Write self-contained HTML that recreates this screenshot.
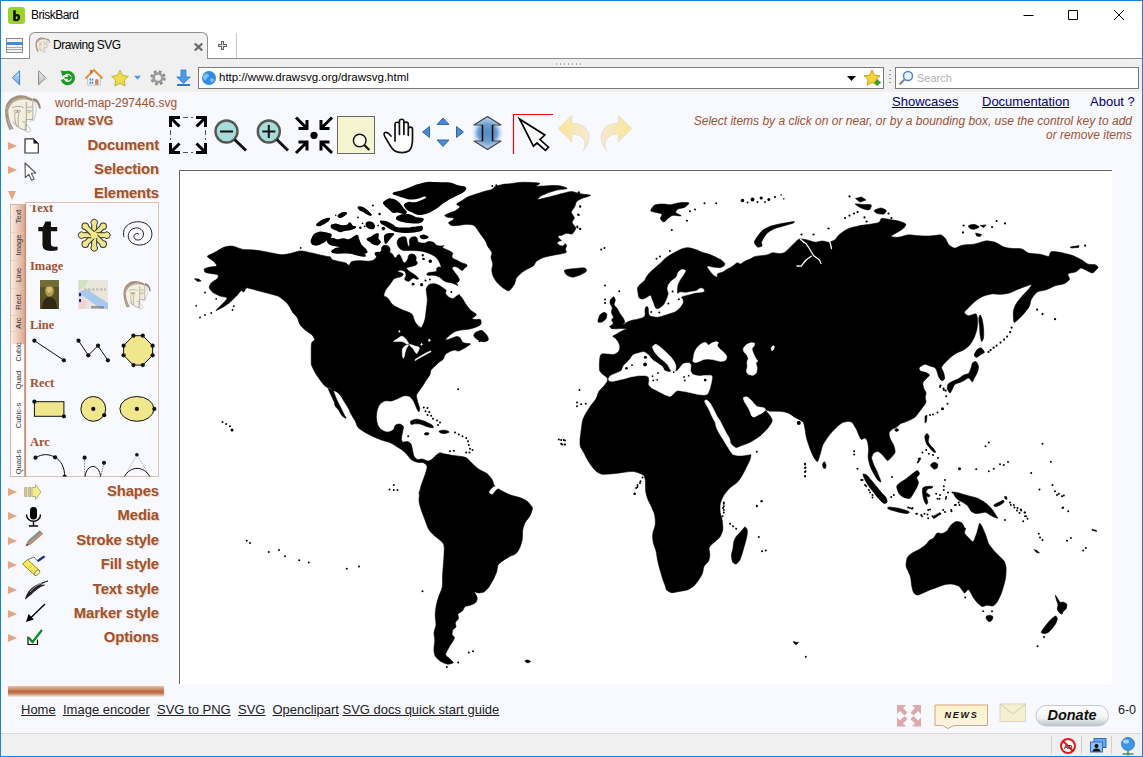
<!DOCTYPE html>
<html>
<head>
<meta charset="utf-8">
<title>Drawing SVG</title>
<style>
html,body{margin:0;padding:0;}
body{width:1143px;height:757px;overflow:hidden;background:#fff;font-family:"Liberation Sans",sans-serif;position:relative;}
.abs{position:absolute;}
#win{position:absolute;left:0;top:0;width:1143px;height:757px;background:#fff;overflow:hidden;}
#winb{position:absolute;left:0;top:0;width:1141px;height:755px;border:1px solid #1883d7;pointer-events:none;}
#title{position:absolute;left:31px;top:8px;font-size:12px;color:#000;letter-spacing:-0.5px;}
#tabrow{position:absolute;left:0;top:31px;width:1143px;height:27px;background:#fff;border-bottom:1px solid #8e8e8e;}
#tab{position:absolute;left:29px;top:1px;width:177px;height:27px;background:#f0f0f0;border:1px solid #8e8e8e;border-bottom:none;border-radius:6px 6px 0 0;}
#tab span{position:absolute;left:23px;top:5px;font-size:12px;color:#000;letter-spacing:-0.45px;}
#toolbar{position:absolute;left:0;top:59px;width:1143px;height:33px;background:#f0f0f0;}
#url{position:absolute;left:198px;top:8px;width:686px;height:22px;background:#fff;border:1px solid #7a7a7a;box-sizing:border-box;}
#url span{position:absolute;left:20px;top:3px;font-size:11.500px;color:#000;}
#search{position:absolute;left:895px;top:8px;width:244px;height:22px;background:#fff;border:1px solid #7a7a7a;box-sizing:border-box;}
#search span{position:absolute;left:21px;top:4px;font-size:11px;color:#b0b0b0;}
#page{position:absolute;left:0;top:93px;width:1143px;height:640px;background:#f8f8ff;box-shadow:0 -1px 0 #f8f8ff;}
#status{position:absolute;left:0;top:733px;width:1143px;height:22px;background:#f0f0f0;border-top:1px solid #d9d9d9;}
.sn{color:#a0522d;}
.menu{position:absolute;right:984px;margin-top:1px;letter-spacing:-0.1px;font-weight:bold;font-size:14.800px;color:#a0522d;text-shadow:1px 1px 1px #ecd2c0;white-space:nowrap;}
.tri{position:absolute;left:8px;margin-top:1px;width:0;height:0;border-left:9px solid #e5a57f;border-top:4.5px solid transparent;border-bottom:4.5px solid transparent;}
.toplink{position:absolute;margin-left:1px;top:1px;font-size:13px;color:#00006e;white-space:nowrap;}
.flink{position:absolute;top:609px;font-size:13px;color:#222;text-decoration:underline;white-space:nowrap;}
#canvas{position:absolute;left:179px;top:77px;width:933px;height:514px;background:#fff;border-left:1px solid #666;border-top:1px solid #666;box-sizing:border-box;box-shadow:-1px -1px 0 #fff;}
.grp{position:absolute;left:30px;font-family:"Liberation Serif",serif;font-weight:bold;font-size:12px;color:#a0522d;}
.vt{position:absolute;left:0px;font-size:8px;color:#444;transform:rotate(-90deg);transform-origin:left top;white-space:nowrap;width:30px;text-align:center;}
</style>
</head>
<body>
<div id="win">
  <!-- title bar -->
  <svg class="abs" style="left:8px;top:7px" width="17" height="17" viewBox="0 0 17 17"><rect x="0" y="0" width="17" height="17" rx="3" fill="#9bd32b"/><path d="M5.2 3.2h2.6v4.2c2.2-1 4.4.2 4.4 2.9 0 2.600-2 3.900-4 3.900-1.100 0-2.200-.2-3-.6z M7.800 9.400v2.700c1.200.3 1.900-.4 1.900-1.500s-.7-1.700-1.900-1.200z" fill="#111"/></svg>
  <div id="title">BriskBard</div>
  <svg class="abs" style="left:1021px;top:9px" width="112" height="14" viewBox="0 0 112 14"><path d="M2.500 6.500h10M47.500 1.500h9v9h-9zM93 1l10 10M103 1l-10 10" fill="none" stroke="#000" stroke-width="1"/></svg>

  <!-- tab row -->
  <div id="tabrow">
    <svg class="abs" style="left:6px;top:7px" width="17" height="15" viewBox="0 0 17 15"><rect x=".5" y=".5" width="16" height="14" fill="#f4f4f4" stroke="#8a8a8a"/><rect x="1" y="4" width="15" height="3" fill="#3d8ee0"/><path d="M1 9.500h15M1 11.500h15" stroke="#aaa"/></svg>
    <div id="tab"><span>Drawing SVG</span>
      
      <svg class="abs" style="left:163px;top:9px" width="11" height="10" viewBox="0 0 11 10"><path d="M1.800 1.500l7.400 7M9.200 1.500l-7.400 7" stroke="#6a6a6a" stroke-width="2.300"/></svg>
    </div>
    <svg class="abs" style="left:217px;top:9px" width="11" height="11" viewBox="0 0 11 11"><path d="M5.500 1v9M1 5.500h9" stroke="#666" stroke-width="3"/><path d="M5.500 2v7M2 5.500h7" stroke="#ddd" stroke-width="1"/></svg>
    <div class="abs" style="left:236px;top:2px;width:1px;height:25px;background:#c8c8c8"></div>
  </div>

  <!-- toolbar -->
  <div id="toolbar">
    <svg class="abs" style="left:0;top:1px" width="200" height="35" viewBox="0 0 200 35">
      <defs><linearGradient id="gBk" x1="0" x2="0" y1="0" y2="1"><stop offset="0" stop-color="#cfe4fb"/><stop offset="1" stop-color="#6aa6ea"/></linearGradient><linearGradient id="gFw" x1="0" x2="0" y1="0" y2="1"><stop offset="0" stop-color="#f2f2f2"/><stop offset="1" stop-color="#b9b9b9"/></linearGradient></defs>
      <path d="M19.600 10.800v14l-7.200-7z" fill="url(#gBk)" stroke="#3a7fd0" stroke-width="1" stroke-linejoin="round"/>
      <path d="M38.600 10.800v14l7.200-7z" fill="url(#gFw)" stroke="#8a8a8a" stroke-width="1" stroke-linejoin="round"/>
      <path d="M62.300 19.500a5.700 5.700 0 1 0 1.200-5.300" fill="none" stroke="#1f9a24" stroke-width="3.200"/><path d="M60.600 10.500l6.200 1-4.200 5z" fill="#1f9a24"/><path d="M64.500 17.800h5.500M68 15.500l2.800 2.300-2.800 2.300" fill="none" stroke="#1f9a24" stroke-width="1.800"/>
      <path d="M85.700 18.500l8.300-8 8.300 8" fill="none" stroke="#f08a24" stroke-width="2.400" stroke-linejoin="miter"/><rect x="90.200" y="10" width="2" height="3.500" fill="#c86a1c"/><path d="M87.700 17.500l6.300-6 6.300 6v7.600H87.700z" fill="#f4f7fb" stroke="#9fb4d0" stroke-width=".7"/><rect x="95" y="19" width="3.500" height="6" rx="1.500" fill="#c98a5a"/><rect x="89.500" y="18.500" width="1.500" height="2" fill="#4a8ad8"/><rect x="91.800" y="18.500" width="1.500" height="2" fill="#4a8ad8"/><rect x="89.500" y="21.800" width="1.500" height="2" fill="#4a8ad8"/><rect x="91.800" y="21.800" width="1.500" height="2" fill="#4a8ad8"/>
      <path d="M120 10.200l2.600 5.300 5.700.8-4.100 4 1 5.700-5.200-2.700-5.200 2.700 1-5.700-4.100-4 5.700-.8z" fill="#ecdc4e" stroke="#c9b030" stroke-width="1" stroke-linejoin="round"/>
      <path d="M134 15.800h7l-3.500 4z" fill="#4f9be8"/>
      <circle cx="158" cy="17.800" r="5.600" fill="none" stroke="#8d8d8d" stroke-width="4.200" stroke-dasharray="2.400 2"/><circle cx="158" cy="17.800" r="4.300" fill="none" stroke="#9c9c9c" stroke-width="2.600"/>
      <path d="M181 10h5v7h4.300l-6.800 6.500-6.800-6.500h4.300z" fill="#4a9cec" stroke="#2d7ad2" stroke-width=".8"/><rect x="177" y="24" width="13" height="2" fill="#2d7ad2"/>
    </svg>
    <div id="url"><span>http://www.drawsvg.org/drawsvg.html</span>
      <svg class="abs" style="left:2px;top:2px" width="16" height="16" viewBox="0 0 16 16"><circle cx="8" cy="8" r="7" fill="#2f8be6"/><path d="M4 4c2-1 4 0 4 2s-3 2-3 4-2 0-3-2 1-3 2-4zM10 8c2 0 3 1 3 2s-2 3-3 2 -1-3 0-4z" fill="#8fd0f5" opacity=".8"/></svg>
      <svg class="abs" style="left:648px;top:8px" width="10" height="6" viewBox="0 0 10 6"><path d="M0 0h9l-4.500 5z" fill="#000"/></svg>
      <svg class="abs" style="left:664px;top:1px" width="20" height="18" viewBox="0 0 20 18"><path d="M9 1l2.400 5.200 5.600.6-4.200 3.800 1.200 5.600L9 13.400 4 16.200l1.200-5.600L1 6.800l5.600-.6z" fill="#f6d337" stroke="#c9a21a" stroke-width="1"/><path d="M14.500 10.500v6M11.500 13.500h6" stroke="#2a9d2a" stroke-width="2.400"/></svg>
    </div>
    <div class="abs" style="left:889px;top:11px;width:2px;height:14px;background:repeating-linear-gradient(#999 0 1px,transparent 1px 4px)"></div>
    <div id="search"><span>Search</span>
      <svg class="abs" style="left:2px;top:2px" width="17" height="16" viewBox="0 0 17 16"><circle cx="10" cy="6" r="4.500" fill="#e6f1fb" stroke="#4b86d0" stroke-width="1.500"/><path d="M6.500 9.500l-5 5" stroke="#888" stroke-width="2.200"/></svg>
    </div>
    <div class="abs" style="left:556px;top:4px;width:28px;height:2px;background:repeating-linear-gradient(90deg,#aaa 0 1px,transparent 1px 4px)"></div>
  </div>

  <!-- page -->
  <div id="page">
    <!-- header -->
    
    <div class="abs sn" style="left:55px;top:3px;font-size:12px;">world-map-297446.svg</div>
    <div class="abs sn" style="left:55px;top:20.500px;font-size:12px;font-weight:bold;text-shadow:1px 1px 1px #ecd2c0;">Draw SVG</div>

    <div class="toplink" style="left:891px;text-decoration:underline">Showcases</div>
    <div class="toplink" style="left:981px;text-decoration:underline">Documentation</div>
    <div class="toplink" style="left:1089px">About ?</div>
    <div class="abs" style="right:11px;top:21px;width:445px;text-align:right;font-size:12px;font-style:italic;color:#a0522d;line-height:14px;">Select items by a click on or near, or by a bounding box, use the control key to add or remove items</div>

    <!-- left menu -->
    <div class="tri" style="top:48px"></div><div class="menu" style="top:43px">Document</div>
    <div class="tri" style="top:72px"></div><div class="menu" style="top:67px">Selection</div>
    <div class="abs" style="left:8px;top:98px;width:0;height:0;border-top:9px solid #e5a57f;border-left:4.500px solid transparent;border-right:4.500px solid transparent;"></div><div class="menu" style="top:91px">Elements</div>
    <div class="tri" style="top:394px"></div><div class="menu" style="top:389.3px">Shapes</div>
    <div class="tri" style="top:418px"></div><div class="menu" style="top:413.3px">Media</div>
    <div class="tri" style="top:443px"></div><div class="menu" style="top:438.3px">Stroke style</div>
    <div class="tri" style="top:467px"></div><div class="menu" style="top:462.3px">Fill style</div>
    <div class="tri" style="top:492px"></div><div class="menu" style="top:487.3px">Text style</div>
    <div class="tri" style="top:516px"></div><div class="menu" style="top:511.3px">Marker style</div>
    <div class="tri" style="top:540px"></div><div class="menu" style="top:535.3px">Options</div>

    <!-- canvas -->
    <div id="canvas"><svg class="abs" style="left:0;top:0" width="932" height="513" viewBox="0 0 932 513"><path d="M423.7 204.0Q422.1 202.8 421.3 201.9L420.2 200.6Q419.4 199.7 419.4 197.3L419.4 194.2Q419.4 191.8 419.6 189.7L419.9 186.8Q420.0 184.7 420.7 184.1L421.5 183.3Q422.1 182.7 423.7 182.8L425.9 183.0Q427.6 183.1 429.5 183.3L432.0 183.5Q433.9 183.6 435.3 182.9L437.2 181.8Q438.6 181.1 439.1 179.6L439.7 177.6Q440.2 176.0 439.6 174.4L438.9 172.2Q438.3 170.5 437.2 169.4L435.8 167.8Q434.7 166.6 434.0 166.2L433.0 165.7Q432.3 165.3 433.7 164.5L435.6 163.5Q437.0 162.7 438.7 161.7L440.9 160.5Q442.6 159.5 444.0 159.0L445.9 158.4Q447.3 157.9 445.6 157.8L443.4 157.6Q441.8 157.5 439.9 157.6L437.4 157.8Q435.5 157.9 433.8 157.7L431.6 157.4Q430.0 157.1 431.6 156.6L433.8 155.8Q435.5 155.3 437.8 154.9L441.0 154.4Q443.3 154.0 444.2 153.2L445.4 152.2Q446.2 151.5 448.1 150.8L450.6 149.8Q452.5 149.0 453.6 148.9L455.1 148.7Q456.2 148.6 458.3 148.0L461.1 147.2Q463.2 146.5 463.9 145.9L464.7 145.1Q465.3 144.4 465.2 142.8L465.0 140.5Q464.9 138.8 465.2 137.8L465.7 136.4Q466.0 135.3 466.7 135.5L467.5 135.8Q468.1 136.0 468.2 137.7L468.4 140.0Q468.5 141.6 468.8 142.7L469.2 144.1Q469.5 145.1 471.8 145.6L474.9 146.1Q477.2 146.5 479.3 146.0L482.1 145.3Q484.2 144.7 485.9 144.1L488.2 143.3Q489.8 142.8 491.5 142.2L493.8 141.5Q495.4 140.9 496.9 139.7L498.9 138.0Q500.3 136.7 501.3 135.3L502.6 133.3Q503.6 131.8 503.4 130.8L503.3 129.4Q503.1 128.3 502.5 127.6L501.7 126.7Q501.0 125.9 503.1 125.4L505.9 124.8Q508.0 124.3 510.1 123.7L512.9 122.9Q515.0 122.3 516.7 122.1L519.0 121.9Q520.6 121.7 522.0 121.4L523.8 121.0Q525.1 120.6 524.6 119.6L523.9 118.2Q523.4 117.1 522.4 117.0L521.0 116.8Q519.9 116.7 518.9 117.5L517.5 118.7Q516.4 119.5 514.8 119.8L512.5 120.1Q510.8 120.3 509.2 120.6L506.9 121.0Q505.2 121.3 503.6 121.1L501.3 120.8Q499.6 120.6 499.0 121.3L498.2 122.1Q497.5 122.7 497.5 121.3L497.5 119.3Q497.5 117.8 497.7 116.4L498.0 114.4Q498.2 112.9 499.1 111.5L500.2 109.5Q501.0 108.0 502.1 106.5L503.5 104.6Q504.5 103.1 505.1 102.1L505.8 100.7Q506.4 99.6 505.6 99.1L504.6 98.4Q503.8 97.9 503.0 98.0L501.9 98.1Q501.0 98.2 500.0 99.1L498.6 100.2Q497.5 101.0 497.1 102.5L496.6 104.4Q496.1 105.9 494.7 107.0L492.7 108.4Q491.2 109.4 490.2 110.7L488.8 112.4Q487.7 113.6 487.4 115.1L487.0 117.1Q486.8 118.5 487.3 119.7L487.9 121.2Q488.4 122.3 487.8 124.1L487.0 126.5Q486.3 128.3 485.5 130.0L484.4 132.2Q483.5 133.9 482.1 135.1L480.1 136.6Q478.6 137.7 477.8 137.6L476.7 137.5Q475.8 137.4 475.4 136.4L474.8 135.0Q474.4 133.9 473.8 132.2L473.0 130.0Q472.3 128.3 471.8 126.9L471.1 125.1Q470.5 123.7 469.4 124.5L467.9 125.5Q466.7 126.2 465.5 126.9L463.8 127.7Q462.5 128.3 461.4 127.9L459.9 127.3Q458.7 126.9 458.5 125.2L458.2 123.0Q457.9 121.3 457.7 119.9L457.5 118.1Q457.3 116.7 458.3 115.6L459.5 114.1Q460.4 112.9 461.8 111.9L463.6 110.5Q464.9 109.4 465.2 108.5L465.7 107.3Q466.0 106.3 467.1 105.0L468.5 103.1Q469.5 101.7 471.2 100.2L473.4 98.3Q475.1 96.8 476.8 95.3L479.0 93.4Q480.7 91.9 482.4 90.2L484.6 88.0Q486.3 86.3 488.6 84.9L491.7 83.1Q494.0 81.7 496.6 80.4L499.9 78.7Q502.4 77.5 504.1 77.2L506.4 76.8Q508.0 76.5 510.6 77.1L513.9 78.0Q516.4 78.6 518.1 79.4L520.4 80.6Q522.0 81.4 524.1 81.9L526.9 82.6Q529.0 83.1 531.1 84.1L533.9 85.3Q536.1 86.3 537.7 87.2L540.0 88.3Q541.7 89.1 542.7 90.2L544.1 91.6Q545.2 92.6 544.7 93.5L544.2 94.6Q543.8 95.4 542.5 95.8L540.8 96.4Q539.6 96.8 537.7 96.6L535.1 96.3Q533.2 96.1 531.6 95.7L529.3 95.1Q527.6 94.7 527.4 95.1L527.2 95.7Q526.9 96.1 528.0 97.6L529.4 99.5Q530.4 101.0 531.6 102.3L533.2 104.0Q534.4 105.2 535.3 105.5L536.5 105.9Q537.5 106.2 537.4 105.1L537.3 103.7Q537.2 102.7 538.9 102.2L541.3 101.5Q543.1 101.0 544.1 100.3L545.5 99.3Q546.6 98.5 547.6 98.0L549.0 97.3Q550.1 96.8 551.3 96.0L553.0 94.9Q554.3 94.0 555.1 93.3L556.2 92.2Q557.1 91.5 558.1 92.0L559.5 92.8Q560.6 93.3 561.6 92.5L563.0 91.4Q564.1 90.5 565.9 89.8L568.3 88.8Q570.1 88.1 571.6 87.3L573.5 86.1Q575.0 85.2 578.8 84.9L583.8 84.4Q587.5 84.0 589.0 83.2L591.0 82.2Q592.5 81.5 594.8 81.9L597.8 82.4Q600.0 82.8 601.5 82.4L603.5 81.9Q605.0 81.5 606.5 80.0L608.5 78.0Q610.0 76.5 611.5 75.0L613.5 73.0Q615.0 71.5 616.1 70.4L617.6 68.9Q618.8 67.8 621.0 68.0L624.0 68.3Q626.2 68.5 628.9 69.4L632.4 70.6Q635.0 71.5 637.2 71.0L640.2 70.3Q642.5 69.8 644.4 70.3L646.9 71.0Q648.8 71.5 650.6 70.8L653.1 69.8Q655.0 69.0 656.2 67.4L657.8 65.2Q659.0 63.5 661.7 61.7L665.3 59.3Q668.0 57.5 671.6 56.6L676.4 55.4Q680.0 54.5 683.6 54.1L688.4 53.5Q692.0 53.0 694.3 52.6L697.3 52.0Q699.5 51.5 700.0 50.2L700.6 48.4Q701.0 47.0 703.7 47.5L707.3 48.1Q710.0 48.5 712.7 49.0L716.3 49.6Q719.0 50.0 721.3 50.9L724.3 52.1Q726.5 53.0 725.6 54.4L724.4 56.2Q723.5 57.5 721.3 58.9L718.3 60.7Q716.0 62.0 714.2 63.1L711.8 64.5Q710.0 65.6 712.7 65.9L716.3 66.3Q719.0 66.5 721.7 65.6L725.3 64.4Q728.0 63.5 731.6 64.0L736.4 64.6Q740.0 65.0 743.6 65.0L748.5 65.0Q752.1 65.0 754.8 64.6L758.4 64.0Q761.1 63.5 762.4 64.7L764.2 66.3Q765.6 67.4 766.5 69.4L767.7 72.0Q768.6 74.0 770.4 75.1L772.8 76.6Q774.6 77.6 776.8 76.6L779.8 75.1Q782.1 74.0 785.7 73.8L790.5 73.6Q794.1 73.4 797.7 72.3L802.5 70.7Q806.1 69.5 808.8 70.0L812.4 70.6Q815.1 71.0 817.8 72.6L821.4 74.8Q824.1 76.4 826.8 76.8L830.4 77.3Q833.1 77.6 835.8 77.6L839.4 77.6Q842.1 77.6 843.9 79.1L846.3 81.0Q848.1 82.4 851.7 82.6L856.5 82.9Q860.1 83.0 862.8 83.9L866.4 85.1Q869.1 86.0 869.5 84.2L870.2 81.8Q870.6 80.0 873.8 80.5L878.0 81.1Q881.1 81.5 884.7 82.4L889.5 83.6Q893.1 84.5 895.8 85.9L899.4 87.7Q902.1 89.0 903.9 90.4L906.3 92.2Q908.1 93.5 910.4 93.5L913.4 93.5Q915.6 93.5 916.5 94.4L917.7 95.6Q918.6 96.5 916.8 98.3L914.4 100.7Q912.6 102.5 910.8 101.6L908.4 100.4Q906.6 99.5 904.8 98.6L902.4 97.4Q900.6 96.5 899.3 97.9L897.5 99.7Q896.1 101.0 893.4 101.5L889.8 102.1Q887.1 102.5 888.0 104.3L889.2 106.7Q890.1 108.5 888.3 109.9L885.9 111.7Q884.1 113.0 881.4 113.5L877.8 114.1Q875.1 114.5 872.4 115.9L868.8 117.7Q866.1 119.0 863.4 119.5L859.8 120.1Q857.1 120.5 855.3 122.8L852.9 125.8Q851.1 128.1 850.6 130.3L850.0 133.3Q849.6 135.6 847.8 137.8L845.4 140.8Q843.6 143.1 841.8 144.9L839.4 147.3Q837.6 149.1 836.4 150.0L834.9 151.2Q833.7 152.1 833.5 148.5L833.3 143.7Q833.1 140.1 834.0 137.8L835.2 134.8Q836.1 132.6 837.9 130.3L840.3 127.3Q842.1 125.1 843.9 123.2L846.3 120.8Q848.1 119.0 849.4 117.2L851.2 114.8Q852.6 113.0 849.4 114.1L845.2 115.6Q842.1 116.6 840.3 117.4L837.9 118.3Q836.1 119.0 834.3 119.9L831.9 121.1Q830.1 122.0 827.4 122.5L823.8 123.1Q821.1 123.5 818.4 123.3L814.8 122.9Q812.1 122.6 809.4 123.4L805.8 124.3Q803.1 125.1 800.8 126.4L797.8 128.2Q795.6 129.6 793.8 131.4L791.4 133.8Q789.6 135.6 787.8 137.4L785.4 139.8Q783.6 141.6 784.9 142.6L786.7 144.1Q788.1 145.2 789.4 144.7L791.2 144.1Q792.6 143.7 793.7 143.3L795.3 142.8Q796.5 142.5 796.8 144.4L797.3 147.1Q797.7 149.1 797.5 151.8L797.3 155.4Q797.1 158.1 796.2 160.8L795.0 164.4Q794.1 167.1 792.7 169.3L790.9 172.3Q789.6 174.6 787.8 175.9L785.4 177.7Q783.6 179.1 781.3 180.0L778.3 181.2Q776.1 182.1 774.3 183.4L771.9 185.2Q770.1 186.6 768.3 188.4L765.9 190.8Q764.1 192.6 763.2 193.7L762.0 195.3Q761.1 196.5 761.9 198.0L762.9 200.0Q763.8 201.5 764.1 203.4L764.6 205.9Q765.0 207.8 764.1 208.5L762.9 209.5Q762.0 210.2 761.0 209.1L759.7 207.6Q758.8 206.5 758.2 204.6L757.5 202.1Q757.0 200.2 756.4 199.1L755.6 197.6Q755.0 196.5 753.5 196.1L751.5 195.6Q750.0 195.2 748.5 194.5L746.5 193.5Q745.0 192.8 743.1 193.9L740.6 195.4Q738.8 196.5 739.1 197.6L739.6 199.1Q740.0 200.2 741.9 200.6L744.4 201.1Q746.2 201.5 747.4 202.2L748.9 203.2Q750.0 204.0 748.9 205.1L747.4 206.6Q746.2 207.8 745.1 208.9L743.6 210.4Q742.5 211.5 742.9 213.4L743.4 215.9Q743.8 217.8 744.5 218.9L745.5 220.4Q746.2 221.5 745.9 223.0L745.4 225.0Q745.0 226.5 745.4 228.0L745.9 230.0Q746.2 231.5 745.1 233.0L743.6 235.0Q742.5 236.5 741.4 238.0L739.9 240.0Q738.8 241.5 737.6 243.0L736.1 245.0Q735.0 246.5 732.8 247.6L729.8 249.1Q727.5 250.2 725.2 251.0L722.2 252.0Q720.0 252.8 718.9 253.9L717.4 255.4Q716.2 256.5 715.1 256.9L713.6 257.4Q712.5 257.8 711.4 258.9L709.9 260.4Q708.8 261.5 709.1 263.4L709.6 265.9Q710.0 267.8 711.1 269.6L712.6 272.1Q713.8 274.0 714.3 276.2L715.0 279.2Q715.5 281.5 714.2 283.0L712.5 285.0Q711.2 286.5 710.1 287.6L708.6 289.1Q707.5 290.2 706.4 288.8L704.9 286.8Q703.8 285.2 702.2 283.8L700.2 281.8Q698.8 280.2 697.2 280.6L695.2 281.1Q693.8 281.5 693.0 283.0L692.0 285.0Q691.2 286.5 692.0 288.8L693.0 291.8Q693.8 294.0 694.9 296.2L696.4 299.2Q697.5 301.5 698.2 303.4L699.2 305.9Q700.0 307.8 700.4 308.9L700.9 310.4Q701.2 311.5 700.1 310.8L698.6 309.8Q697.5 309.0 696.4 307.1L694.9 304.6Q693.8 302.8 692.6 300.5L691.1 297.5Q690.0 295.2 689.4 292.6L688.6 289.1Q688.0 286.5 688.2 283.9L688.5 280.4Q688.8 277.8 688.4 275.5L687.9 272.5Q687.5 270.2 686.8 269.1L685.8 267.6Q685.0 266.5 683.9 267.2L682.4 268.2Q681.2 269.0 680.5 267.5L679.5 265.5Q678.8 264.0 678.0 262.1L677.0 259.6Q676.2 257.8 675.1 255.9L673.6 253.4Q672.5 251.5 671.4 251.1L669.9 250.6Q668.8 250.2 666.9 250.6L664.4 251.1Q662.5 251.5 661.0 252.6L659.0 254.1Q657.5 255.2 656.0 256.8L654.0 258.8Q652.5 260.2 651.0 262.1L649.0 264.6Q647.5 266.5 646.0 268.8L644.0 271.8Q642.5 274.0 641.8 277.0L640.8 281.0Q640.0 284.0 639.2 286.2L638.2 289.2Q637.5 291.5 636.4 290.0L634.9 288.0Q633.8 286.5 632.6 283.9L631.1 280.4Q630.0 277.8 628.9 274.4L627.4 269.9Q626.2 266.5 625.9 263.9L625.4 260.4Q625.0 257.8 624.6 255.9L624.1 253.4Q623.8 251.5 622.6 250.8L621.1 249.8Q620.0 249.0 618.5 248.2L616.5 247.2Q615.0 246.5 613.5 245.4L611.5 243.9Q610.0 242.8 608.5 242.2L606.5 241.5Q605.0 241.0 603.5 240.8L601.5 240.5Q600.0 240.2 599.2 240.2L598.2 240.2Q597.5 240.2 595.2 240.2L592.2 240.2Q590.0 240.2 588.5 239.7L586.5 239.0Q585.0 238.5 586.9 240.9L589.4 244.1Q591.2 246.5 591.6 247.6L592.1 249.1Q592.5 250.2 591.0 252.5L589.0 255.5Q587.5 257.8 585.2 260.0L582.2 263.0Q580.0 265.2 577.0 267.1L573.0 269.6Q570.0 271.5 567.0 272.6L563.0 274.1Q560.0 275.2 558.5 275.8L556.5 276.5Q555.0 277.0 556.5 279.1L558.5 281.9Q560.0 284.0 563.4 283.6L567.9 283.1Q571.2 282.8 570.9 284.6L570.4 287.1Q570.0 289.0 568.9 291.2L567.4 294.2Q566.2 296.5 565.1 298.8L563.6 301.8Q562.5 304.0 561.0 306.2L559.0 309.2Q557.5 311.5 555.2 313.0L552.2 315.0Q550.0 316.5 548.1 318.8L545.6 321.8Q543.8 324.0 542.6 326.6L541.1 330.1Q540.0 332.8 540.0 335.4L540.0 338.9Q540.0 341.5 540.8 344.1L541.8 347.6Q542.5 350.2 542.6 352.9L542.9 356.4Q543.0 359.0 542.1 361.2L540.9 364.2Q540.0 366.5 538.1 368.0L535.6 370.0Q533.8 371.5 532.2 373.0L530.2 375.0Q528.8 376.5 529.1 378.8L529.6 381.8Q530.0 384.0 529.6 385.9L529.1 388.4Q528.8 390.2 527.2 391.8L525.2 393.8Q523.8 395.2 523.4 397.5L522.9 400.5Q522.5 402.8 521.4 404.6L519.9 407.1Q518.8 409.0 517.2 410.9L515.2 413.4Q513.8 415.2 511.9 416.4L509.4 417.9Q507.5 419.0 505.2 419.4L502.2 419.9Q500.0 420.2 497.4 420.8L493.9 421.5Q491.2 422.0 489.8 421.1L487.8 419.9Q486.2 419.0 486.0 417.9L485.7 416.4Q485.5 415.2 484.6 413.0L483.4 410.0Q482.5 407.8 481.8 405.1L480.8 401.6Q480.0 399.0 479.2 396.0L478.2 392.0Q477.5 389.0 477.1 386.4L476.6 382.9Q476.2 380.2 475.3 377.6L474.0 374.1Q473.0 371.5 472.9 368.9L472.6 365.4Q472.5 362.8 473.4 360.1L474.6 356.6Q475.5 354.0 475.4 351.0L475.1 347.0Q475.0 344.0 473.9 341.4L472.4 337.9Q471.2 335.2 470.1 333.0L468.6 330.0Q467.5 327.8 466.9 325.5L466.1 322.5Q465.5 320.2 465.5 316.9L465.5 312.4Q465.5 309.0 465.0 307.5L464.3 305.5Q463.8 304.0 461.9 303.2L459.4 302.2Q457.5 301.5 456.0 301.1L454.0 300.6Q452.5 300.2 449.5 300.6L445.5 301.1Q442.5 301.5 439.5 301.9L435.5 302.4Q432.5 302.8 429.5 303.0L425.5 303.3Q422.5 303.5 421.0 302.9L419.0 302.1Q417.5 301.5 416.0 300.0L414.0 298.0Q412.5 296.5 411.0 294.2L409.0 291.2Q407.5 289.0 406.4 286.8L404.9 283.8Q403.8 281.5 402.6 279.6L401.1 277.1Q400.0 275.2 400.0 273.0L400.0 270.0Q400.0 267.8 400.4 265.1L400.9 261.6Q401.2 259.0 401.6 256.0L402.1 252.0Q402.5 249.0 403.6 246.8L405.1 243.8Q406.2 241.5 407.8 239.2L409.8 236.2Q411.2 234.0 412.8 232.1L414.8 229.6Q416.2 227.8 417.0 225.5L418.0 222.5Q418.8 220.2 420.2 218.8L422.2 216.8Q423.8 215.2 424.9 213.8L426.4 211.8Q427.5 210.2 427.5 209.2L427.6 207.8Q427.6 206.8 425.9 205.6L423.7 204.0ZM472.6 35.9Q473.8 34.0 476.4 33.6L479.9 33.1Q482.5 32.8 484.8 33.1L487.8 33.6Q490.0 34.0 493.0 33.2L497.0 32.2Q500.0 31.5 503.0 31.5L507.0 31.5Q510.0 31.5 508.5 33.0L506.5 35.0Q505.0 36.5 502.8 36.9L499.8 37.4Q497.5 37.8 496.8 38.9L495.8 40.4Q495.0 41.5 497.2 42.6L500.2 44.1Q502.5 45.2 499.5 44.9L495.5 44.4Q492.5 44.0 491.0 45.1L489.0 46.6Q487.5 47.8 486.4 48.9L484.9 50.4Q483.8 51.5 482.6 50.4L481.1 48.9Q480.0 47.8 480.8 46.2L481.8 44.2Q482.5 42.8 480.6 42.4L478.1 41.9Q476.2 41.5 474.4 41.1L471.9 40.6Q470.0 40.2 471.1 38.4L472.6 35.9ZM576.4 67.1Q577.5 65.2 579.0 63.4L581.0 60.9Q582.5 59.0 584.8 57.9L587.8 56.4Q590.0 55.2 593.0 54.5L597.0 53.5Q600.0 52.8 604.5 52.0L610.5 51.0Q615.0 50.2 614.6 50.8L614.1 51.5Q613.8 52.0 610.4 53.0L605.9 54.3Q602.5 55.2 599.9 56.0L596.4 57.0Q593.8 57.8 591.9 58.9L589.4 60.4Q587.5 61.5 586.4 63.0L584.9 65.0Q583.8 66.5 583.0 68.0L582.0 70.0Q581.2 71.5 581.6 72.6L582.1 74.1Q582.5 75.2 581.0 75.6L579.0 76.1Q577.5 76.5 576.4 75.0L574.9 73.0Q573.8 71.5 574.9 69.6L576.4 67.1ZM432.6 126.4Q433.8 125.2 434.3 126.4L435.0 127.9Q435.5 129.0 435.0 130.5L434.3 132.5Q433.8 134.0 434.9 135.1L436.4 136.6Q437.5 137.8 438.2 139.2L439.2 141.2Q440.0 142.8 441.1 144.2L442.6 146.2Q443.8 147.8 444.1 148.9L444.6 150.4Q445.0 151.5 443.9 152.6L442.4 154.1Q441.2 155.2 439.0 155.8L436.0 156.5Q433.8 157.0 432.2 156.7L430.2 156.3Q428.8 156.0 430.2 155.0L432.2 153.7Q433.8 152.8 433.0 151.6L432.0 150.1Q431.2 149.0 432.0 148.2L433.0 147.2Q433.8 146.5 433.0 145.0L432.0 143.0Q431.2 141.5 431.6 140.0L432.1 138.0Q432.5 136.5 431.8 135.4L430.8 133.9Q430.0 132.8 430.0 131.6L430.0 130.1Q430.0 129.0 431.1 127.9L432.6 126.4ZM418.9 146.2Q419.5 144.0 420.8 143.1L422.5 141.9Q423.8 141.0 424.7 141.5L426.0 142.2Q427.0 142.8 426.8 144.2L426.5 146.2Q426.2 147.8 425.1 148.7L423.6 150.0Q422.5 151.0 421.0 151.2L419.0 151.3Q417.5 151.5 418.1 149.2L418.9 146.2ZM675.5 27.5L681.5 26.0L686.0 29.0L680.0 31.1ZM680.3 33.2Q683.0 33.5 685.7 33.5L689.3 33.5Q692.0 33.5 691.3 35.3L690.3 37.7Q689.6 39.5 687.2 38.9L684.0 38.0Q681.5 37.4 679.3 36.0L676.3 34.1Q674.0 32.6 676.7 32.9L680.3 33.2ZM698.8 37.4Q701.0 36.5 702.8 37.4L705.2 38.6Q707.0 39.5 706.1 40.7L704.9 42.2Q704.0 43.4 701.8 43.1L698.8 42.8Q696.5 42.5 695.6 41.6L694.4 40.4Q693.5 39.5 695.8 38.6L698.8 37.4ZM792.3 53.5Q794.1 53.0 795.9 53.9L798.3 55.1Q800.1 56.0 798.3 56.7L795.9 57.7Q794.1 58.4 792.7 58.2L790.9 57.8Q789.6 57.5 789.1 56.6L788.5 55.4Q788.1 54.5 789.9 54.1L792.3 53.5ZM800.1 54.5L806.1 53.9L803.7 56.6ZM795.6 62.0L801.6 63.5L800.1 65.6L796.5 65.0ZM890.1 76.1L899.1 74.6L898.5 76.4L891.6 77.0ZM801.8 147.3Q802.5 149.1 802.8 151.8L803.3 155.4Q803.7 158.1 803.7 160.8L803.7 164.4Q803.7 167.1 803.0 168.4L802.2 170.2Q801.6 171.6 801.1 169.3L800.5 166.3Q800.1 164.1 799.9 161.4L799.7 157.8Q799.5 155.1 799.2 152.8L798.8 149.8Q798.6 147.6 799.0 146.2L799.6 144.4Q800.1 143.1 800.8 144.9L801.8 147.3ZM796.4 179.6Q797.5 177.8 798.6 177.4L800.1 176.9Q801.2 176.5 802.4 178.0L803.9 180.0Q805.0 181.5 803.5 182.2L801.5 183.2Q800.0 184.0 798.9 184.9L797.4 186.1Q796.2 187.0 795.5 186.1L794.5 184.9Q793.8 184.0 794.9 182.1L796.4 179.6ZM795.1 190.6Q796.2 190.2 797.0 191.8L798.0 193.8Q798.8 195.2 798.4 197.1L797.9 199.6Q797.5 201.5 796.4 203.4L794.9 205.9Q793.8 207.8 793.4 208.9L792.9 210.4Q792.5 211.5 791.4 210.0L789.9 208.0Q788.8 206.5 787.6 207.2L786.1 208.2Q785.0 209.0 783.5 209.8L781.5 210.8Q780.0 211.5 778.5 211.9L776.5 212.4Q775.0 212.8 774.2 214.2L773.2 216.2Q772.5 217.8 771.8 219.2L770.8 221.2Q770.0 222.8 769.1 221.2L767.9 219.2Q767.0 217.8 767.3 216.2L767.7 214.2Q768.0 212.8 769.4 212.0L771.1 211.0Q772.5 210.2 774.4 209.5L776.9 208.5Q778.8 207.8 780.2 206.6L782.2 205.1Q783.8 204.0 785.2 203.6L787.2 203.1Q788.8 202.8 789.5 200.9L790.5 198.4Q791.2 196.5 791.6 195.0L792.1 193.0Q792.5 191.5 793.6 191.1L795.1 190.6ZM745.0 245.2L747.0 244.0L746.5 250.2L745.0 252.0ZM716.4 257.6Q717.0 257.5 717.7 257.9L718.6 258.6Q719.2 259.0 718.6 259.4L717.7 260.1Q717.0 260.5 716.4 260.4L715.6 260.1Q715.0 260.0 715.0 259.4L715.0 258.6Q715.0 258.0 715.6 257.9L716.4 257.6ZM643.9 291.0Q644.5 290.2 645.0 291.4L645.7 292.9Q646.2 294.0 646.0 295.1L645.7 296.6Q645.5 297.8 644.8 297.5L643.8 297.2Q643.0 297.0 642.9 295.7L642.6 294.0Q642.5 292.8 643.1 292.0L643.9 291.0ZM685.1 303.3Q686.2 303.5 687.8 305.1L689.8 307.4Q691.2 309.0 692.8 310.9L694.8 313.4Q696.2 315.2 697.8 317.1L699.8 319.6Q701.2 321.5 702.8 323.0L704.8 325.0Q706.2 326.5 706.6 328.0L707.1 330.0Q707.5 331.5 706.4 331.9L704.9 332.4Q703.8 332.8 702.2 331.2L700.2 329.2Q698.8 327.8 697.2 325.9L695.2 323.4Q693.8 321.5 692.2 319.6L690.2 317.1Q688.8 315.2 687.6 313.4L686.1 310.9Q685.0 309.0 684.2 307.1L683.2 304.6Q682.5 302.8 683.6 303.0L685.1 303.3ZM712.8 336.4Q715.0 336.5 717.6 337.1L721.1 337.9Q723.8 338.5 725.6 339.2L728.1 340.2Q730.0 341.0 729.2 341.5L728.2 342.2Q727.5 342.8 725.2 342.4L722.2 341.9Q720.0 341.5 717.8 340.9L714.8 340.1Q712.5 339.5 711.1 339.1L709.4 338.4Q708.0 338.0 707.9 337.4L707.6 336.6Q707.5 336.0 709.8 336.1L712.8 336.4ZM718.9 312.6Q720.0 311.5 721.9 310.4L724.4 308.9Q726.2 307.8 728.1 306.2L730.6 304.2Q732.5 302.8 734.0 301.6L736.0 300.1Q737.5 299.0 738.2 300.1L739.2 301.6Q740.0 302.8 738.9 303.9L737.4 305.4Q736.2 306.5 737.0 308.0L738.0 310.0Q738.8 311.5 738.0 313.4L737.0 315.9Q736.2 317.8 735.1 319.6L733.6 322.1Q732.5 324.0 731.8 325.1L730.8 326.6Q730.0 327.8 728.1 327.4L725.6 326.9Q723.8 326.5 722.2 325.4L720.2 323.9Q718.8 322.8 718.0 320.5L717.0 317.5Q716.2 315.2 717.4 314.1L718.9 312.6ZM746.2 263.0Q747.0 262.0 747.7 263.0L748.6 264.3Q749.2 265.2 748.9 266.8L748.4 268.8Q748.0 270.2 748.6 271.4L749.4 272.9Q750.0 274.0 751.1 275.1L752.6 276.6Q753.8 277.8 754.5 278.9L755.5 280.4Q756.2 281.5 755.3 281.4L754.0 281.1Q753.0 281.0 752.0 279.6L750.5 277.9Q749.5 276.5 748.5 275.4L747.2 273.9Q746.2 272.8 745.7 270.5L745.0 267.5Q744.5 265.2 745.2 264.3L746.2 263.0ZM752.6 291.9Q753.8 291.0 755.0 291.5L756.7 292.2Q758.0 292.8 757.9 294.0L757.6 295.7Q757.5 297.0 756.4 297.4L754.9 298.1Q753.8 298.5 752.6 297.1L751.1 295.4Q750.0 294.0 751.1 293.1L752.6 291.9ZM737.0 291.5L740.0 286.5L740.8 287.8L738.0 292.2ZM746.0 315.6Q747.5 315.2 749.1 315.2L751.4 315.2Q753.0 315.2 752.9 315.8L752.6 316.5Q752.5 317.0 751.0 317.2L749.0 317.5Q747.5 317.8 746.9 318.9L746.1 320.4Q745.5 321.5 746.9 322.2L748.6 323.2Q750.0 324.0 749.9 324.6L749.6 325.4Q749.5 326.0 748.5 325.8L747.2 325.5Q746.2 325.2 746.8 327.1L747.5 329.6Q748.0 331.5 747.5 332.2L746.8 333.2Q746.2 334.0 745.5 332.5L744.5 330.5Q743.8 329.0 743.4 327.1L742.9 324.6Q742.5 322.8 742.5 320.9L742.5 318.4Q742.5 316.5 744.0 316.1L746.0 315.6ZM776.0 321.4Q777.5 321.5 779.4 322.1L781.9 322.9Q783.8 323.5 785.6 324.0L788.1 324.7Q790.0 325.2 792.2 325.8L795.2 326.5Q797.5 327.0 799.8 328.4L802.8 330.1Q805.0 331.5 806.9 333.1L809.4 335.4Q811.2 337.0 812.4 338.7L813.9 341.0Q815.0 342.8 816.0 344.2L817.3 346.2Q818.2 347.8 816.4 347.0L813.9 346.0Q812.0 345.2 810.1 344.0L807.6 342.3Q805.8 341.0 804.2 341.3L802.2 341.7Q800.8 342.0 799.2 342.2L797.2 342.5Q795.8 342.8 794.2 342.0L792.2 341.0Q790.8 340.2 790.0 338.8L789.0 336.8Q788.2 335.2 786.8 334.1L784.8 332.6Q783.2 331.5 781.8 330.8L779.8 329.8Q778.2 329.0 777.5 328.2L776.5 327.2Q775.8 326.5 774.8 324.9L773.5 322.6Q772.5 321.0 774.0 321.1L776.0 321.4ZM816.8 332.2Q818.2 331.5 819.8 330.8L821.8 329.8Q823.2 329.0 823.6 329.6L824.1 330.4Q824.5 331.0 823.0 332.1L821.0 333.4Q819.5 334.5 818.1 334.9L816.4 335.6Q815.0 336.0 814.5 335.4L813.8 334.6Q813.2 334.0 814.8 333.2L816.8 332.2ZM755.1 344.2Q756.2 343.5 757.4 342.9L758.9 342.1Q760.0 341.5 760.4 341.9L760.9 342.4Q761.2 342.8 760.1 343.5L758.6 344.5Q757.5 345.2 756.4 346.0L754.9 347.0Q753.8 347.8 753.4 347.2L752.9 346.5Q752.5 346.0 753.6 345.2L755.1 344.2ZM566.8 357.9Q567.5 359.0 567.4 360.9L567.1 363.4Q567.0 365.2 566.4 367.5L565.6 370.5Q565.0 372.8 564.2 375.4L563.2 378.9Q562.5 381.5 561.8 383.8L560.8 386.8Q560.0 389.0 558.9 390.4L557.4 392.1Q556.2 393.5 555.1 392.9L553.6 392.1Q552.5 391.5 552.1 389.2L551.6 386.2Q551.2 384.0 551.8 382.1L552.5 379.6Q553.0 377.8 553.2 375.5L553.5 372.5Q553.8 370.2 554.5 368.8L555.5 366.8Q556.2 365.2 557.8 363.8L559.8 361.8Q561.2 360.2 562.4 358.8L563.9 356.8Q565.0 355.2 565.8 356.4L566.8 357.9ZM615.3 471.1Q616.2 471.5 617.0 471.4L618.0 471.1Q618.8 471.0 618.0 471.9L617.0 473.1Q616.2 474.0 615.7 473.6L615.0 473.1Q614.5 472.8 614.0 472.0L613.5 471.0Q613.0 470.2 614.0 470.6L615.3 471.1ZM726.6 389.1Q727.0 386.5 728.1 385.4L729.6 383.9Q730.8 382.8 733.0 381.6L736.0 380.1Q738.2 379.0 740.5 377.5L743.5 375.5Q745.8 374.0 746.9 372.5L748.4 370.5Q749.5 369.0 750.6 368.6L752.1 368.1Q753.2 367.8 754.4 365.9L755.9 363.4Q757.0 361.5 758.5 361.9L760.5 362.4Q762.0 362.8 763.5 362.0L765.5 361.0Q767.0 360.2 768.1 358.4L769.6 355.9Q770.8 354.0 772.2 352.9L774.2 351.4Q775.8 350.2 777.6 350.6L780.1 351.1Q782.0 351.5 782.9 353.4L784.1 355.9Q785.0 357.8 784.9 359.2L784.6 361.2Q784.5 362.8 786.0 364.2L788.0 366.2Q789.5 367.8 790.6 368.9L792.1 370.4Q793.2 371.5 794.4 368.5L795.9 364.5Q797.0 361.5 797.8 358.5L798.8 354.5Q799.5 351.5 800.2 352.6L801.2 354.1Q802.0 355.2 803.1 357.9L804.6 361.4Q805.8 364.0 806.5 366.6L807.5 370.1Q808.2 372.8 809.8 374.6L811.8 377.1Q813.2 379.0 815.1 380.9L817.6 383.4Q819.5 385.2 821.0 386.8L823.0 388.8Q824.5 390.2 825.0 392.1L825.7 394.6Q826.2 396.5 826.1 399.5L825.9 403.5Q825.8 406.5 825.0 409.5L824.0 413.5Q823.2 416.5 822.5 418.8L821.5 421.8Q820.8 424.0 819.6 426.2L818.1 429.2Q817.0 431.5 815.9 432.6L814.4 434.1Q813.2 435.2 811.4 434.9L808.9 434.4Q807.0 434.0 805.5 434.6L803.5 435.4Q802.0 436.0 800.5 434.6L798.5 432.9Q797.0 431.5 795.9 430.0L794.4 428.0Q793.2 426.5 792.5 425.0L791.5 423.0Q790.8 421.5 790.0 420.4L789.0 418.9Q788.2 417.8 787.1 419.2L785.6 421.2Q784.5 422.8 783.8 421.6L782.8 420.1Q782.0 419.0 781.2 417.9L780.2 416.4Q779.5 415.2 777.2 414.5L774.2 413.5Q772.0 412.8 769.8 413.0L766.8 413.3Q764.5 413.5 762.2 414.4L759.2 415.6Q757.0 416.5 754.8 417.2L751.8 418.2Q749.5 419.0 747.6 419.9L745.1 421.1Q743.2 422.0 741.4 422.8L738.9 423.8Q737.0 424.5 735.9 423.6L734.4 422.4Q733.2 421.5 732.7 419.2L732.0 416.2Q731.5 414.0 731.3 411.8L731.0 408.8Q730.8 406.5 730.0 404.6L729.0 402.1Q728.2 400.2 727.5 398.8L726.5 396.8Q725.8 395.2 726.1 392.6L726.6 389.1ZM808.4 444.4Q809.5 444.0 810.6 444.4L812.1 444.9Q813.2 445.2 812.9 446.5L812.4 448.2Q812.0 449.5 811.1 449.9L809.9 450.6Q809.0 451.0 808.2 450.2L807.2 449.2Q806.5 448.5 806.3 447.5L806.0 446.2Q805.8 445.2 806.9 444.9L808.4 444.4ZM876.4 425.6Q877.0 426.5 877.9 428.0L879.1 430.0Q880.0 431.5 881.0 431.4L882.3 431.1Q883.2 431.0 884.4 431.5L885.9 432.2Q887.0 432.8 886.9 434.2L886.6 436.2Q886.5 437.8 885.5 438.5L884.2 439.5Q883.2 440.2 882.9 441.2L882.4 442.5Q882.0 443.5 881.1 442.9L879.9 442.1Q879.0 441.5 878.4 440.4L877.6 438.9Q877.0 437.8 877.4 436.6L877.9 435.1Q878.2 434.0 877.7 432.5L877.0 430.5Q876.5 429.0 876.0 427.4L875.5 425.1Q875.0 423.5 875.6 424.4L876.4 425.6ZM877.0 446.8Q877.5 447.8 877.0 449.2L876.3 451.2Q875.8 452.8 874.6 454.2L873.1 456.2Q872.0 457.8 870.9 458.9L869.4 460.4Q868.2 461.5 867.0 461.9L865.3 462.4Q864.0 462.8 863.0 462.4L861.7 461.9Q860.8 461.5 861.5 460.4L862.5 458.9Q863.2 457.8 864.4 456.2L865.9 454.2Q867.0 452.8 868.1 451.5L869.6 449.8Q870.8 448.5 872.2 447.3L874.2 445.7Q875.8 444.5 876.3 445.5L877.0 446.8ZM854.0 378.5L857.0 379.5L859.5 382.0L856.5 381.5ZM912.0 358.2L916.5 359.5L916.5 360.5L912.0 359.2ZM824.5 325.2L826.5 326.0L827.0 328.5L825.0 327.8ZM14.5 107.8L18.8 108.0L21.2 110.0L17.5 110.5ZM218.3 68.2Q218.8 67.3 220.0 66.8L221.6 66.1Q222.7 65.6 223.8 65.7L225.2 65.9Q226.2 66.0 226.5 67.8L226.9 70.3Q227.1 72.1 227.5 73.2L228.0 74.6Q228.4 75.6 228.8 75.4L229.4 75.0Q229.7 74.7 229.6 73.2L229.4 71.1Q229.3 69.5 229.7 68.6L230.2 67.4Q230.6 66.4 231.9 66.2L233.7 65.8Q235.0 65.6 235.7 66.0L236.5 66.5Q237.2 66.9 237.3 68.1L237.5 69.6Q237.6 70.8 238.7 71.2L240.1 71.7Q241.1 72.1 242.4 72.1L244.2 72.1Q245.5 72.1 246.2 71.6L247.0 70.9Q247.7 70.4 248.9 70.4L250.4 70.4Q251.6 70.4 252.5 70.9L253.8 71.6Q254.7 72.1 255.1 72.8L255.6 73.7Q256.0 74.3 257.6 74.6L259.7 74.9Q261.2 75.2 262.2 74.9L263.4 74.6Q264.3 74.3 263.6 75.0L262.8 75.8Q262.1 76.5 263.2 77.0L264.6 77.7Q265.6 78.2 266.9 78.8L268.7 79.5Q270.0 80.0 270.9 80.7L272.1 81.5Q273.1 82.2 272.7 83.1L272.1 84.3Q271.7 85.2 272.0 85.9L272.4 86.8Q272.6 87.4 273.9 88.0L275.7 88.7Q277.0 89.2 278.3 90.0L280.1 91.0Q281.4 91.8 282.8 92.2L284.7 92.7Q286.2 93.1 286.6 93.6L287.1 94.3Q287.5 94.9 286.4 95.7L285.0 96.7Q284.0 97.5 283.6 98.2L283.1 99.0Q282.7 99.7 281.9 99.3L280.8 98.8Q280.1 98.4 279.3 97.7L278.2 96.8Q277.4 96.2 276.5 95.9L275.3 95.6Q274.4 95.3 273.6 95.8L272.5 96.5Q271.7 97.1 272.5 98.2L273.6 99.8Q274.4 101.0 275.4 102.3L276.8 104.1Q277.9 105.4 278.4 106.4L279.1 107.8Q279.6 108.9 279.1 109.7L278.4 110.7Q277.9 111.5 277.3 111.5L276.6 111.5Q276.1 111.5 276.8 112.5L277.6 113.9Q278.3 115.0 277.4 114.5L276.2 113.8Q275.2 113.2 273.9 112.7L272.2 112.0Q270.9 111.5 269.6 111.4L267.8 111.2Q266.5 111.1 265.4 110.5L264.0 109.8Q263.0 109.3 262.2 108.5L261.2 107.5Q260.4 106.7 259.1 106.0L257.3 105.2Q256.0 104.5 254.7 104.4L252.9 104.2Q251.6 104.1 250.4 104.2L248.9 104.4Q247.7 104.5 247.3 104.0L246.8 103.3Q246.4 102.7 247.2 102.4L248.2 101.8Q249.0 101.4 250.6 101.3L252.7 101.1Q254.2 101.0 255.0 100.7L256.1 100.4Q256.9 100.1 256.7 99.3L256.6 98.3Q256.4 97.5 257.1 97.0L258.0 96.3Q258.6 95.7 259.4 96.0L260.5 96.4Q261.2 96.6 261.0 95.6L260.6 94.2Q260.4 93.1 259.8 92.1L259.1 90.7Q258.6 89.6 257.8 88.6L256.8 87.2Q256.0 86.1 254.7 85.3L252.9 84.3Q251.6 83.5 250.0 82.8L247.9 82.0Q246.4 81.3 244.8 80.9L242.7 80.4Q241.1 80.0 239.3 79.9L236.8 79.7Q235.0 79.6 233.2 79.6L230.7 79.6Q228.9 79.6 227.3 79.6L225.2 79.6Q223.6 79.6 222.6 79.2L221.2 78.6Q220.1 78.2 219.5 77.3L218.6 76.1Q217.9 75.2 217.7 74.3L217.3 73.0Q217.1 72.1 217.1 71.6L217.1 70.9Q217.1 70.4 217.6 69.5L218.3 68.2ZM267.8 42.8Q269.5 42.1 271.4 41.3L274.0 40.4Q275.9 39.7 277.3 38.5L279.2 36.9Q280.6 35.7 279.2 35.0L277.3 34.1Q275.9 33.3 277.8 32.1L280.3 30.6Q282.2 29.4 284.1 28.2L286.6 26.6Q288.5 25.4 290.9 24.7L294.1 23.7Q296.5 23.0 299.3 22.1L303.1 20.8Q306.0 19.9 307.9 19.5L310.4 19.0Q312.3 18.6 313.0 17.6L314.0 16.4Q314.7 15.4 317.3 14.8L320.8 13.9Q323.4 13.2 325.3 13.1L327.9 12.9Q329.8 12.7 333.6 12.2L338.7 11.6Q342.5 11.1 346.3 11.3L351.3 11.5Q355.1 11.6 356.8 11.8L359.0 12.1Q360.7 12.2 359.0 13.2L356.8 14.5Q355.1 15.4 359.0 15.2L364.0 15.0Q367.8 14.8 371.2 14.6L375.6 14.5Q378.9 14.3 381.9 15.3L385.8 16.5Q388.8 17.5 385.1 18.0L380.2 18.6Q376.6 19.1 373.9 19.9L370.5 21.0Q367.8 21.8 365.5 22.9L362.3 24.3Q359.9 25.4 359.0 26.5L357.7 28.0Q356.7 29.1 360.5 28.1L365.6 26.8Q369.4 25.9 373.0 24.9L377.7 23.7Q381.3 22.7 384.4 22.0L388.5 20.9Q391.6 20.2 394.0 20.9L397.2 22.0Q399.5 22.7 403.4 23.2L408.4 23.8Q412.2 24.3 409.4 25.1L405.6 26.2Q402.7 27.0 400.8 27.9L398.3 29.2Q396.4 30.2 395.9 31.8L395.3 34.1Q394.8 35.7 393.6 37.4L392.0 39.6Q390.8 41.3 392.0 42.9L393.6 45.2Q394.8 46.8 393.8 48.2L392.6 50.1Q391.6 51.6 393.0 53.2L395.0 55.5Q396.4 57.1 395.2 59.0L393.6 61.6Q392.4 63.5 390.7 63.0L388.5 62.4Q386.9 61.9 385.4 62.6L383.5 63.5Q382.1 64.3 380.7 64.5L378.8 64.8Q377.3 65.1 378.3 66.2L379.6 67.8Q380.5 69.0 382.4 70.4L385.0 72.3Q386.9 73.8 386.4 75.2L385.8 77.1Q385.3 78.5 385.8 79.4L386.4 80.5Q386.9 81.4 385.0 81.9L382.4 82.5Q380.5 83.0 378.6 83.3L376.1 83.7Q374.2 84.1 372.3 84.4L369.7 84.9Q367.8 85.2 365.9 85.8L363.4 86.6Q361.5 87.3 359.8 88.2L357.6 89.5Q355.9 90.4 355.2 91.9L354.3 93.8Q353.6 95.2 351.4 96.1L348.6 97.4Q346.4 98.4 344.8 99.5L342.5 101.1Q340.9 102.3 339.4 103.7L337.5 105.6Q336.1 107.1 335.6 109.0L335.0 111.5Q334.5 113.4 332.9 115.6L330.6 118.4Q329.0 120.6 327.3 119.6L325.1 118.3Q323.4 117.4 321.5 115.7L319.0 113.5Q317.1 111.8 315.9 109.9L314.3 107.4Q313.1 105.5 312.6 103.6L312.0 101.1Q311.5 99.1 312.0 97.2L312.6 94.7Q313.1 92.8 312.4 90.9L311.5 88.4Q310.7 86.5 311.2 85.0L311.9 83.1Q312.3 81.7 310.9 79.8L309.0 77.3Q307.6 75.4 307.1 73.9L306.5 72.0Q306.0 70.6 304.8 68.9L303.2 66.7Q302.0 65.1 300.8 63.4L299.2 61.2Q298.1 59.5 296.9 57.8L295.3 55.6Q294.1 54.0 292.0 53.7L289.1 53.4Q287.0 53.2 284.6 53.5L281.4 54.0Q279.0 54.4 276.7 54.5L273.5 54.7Q271.1 54.7 270.1 53.8L268.9 52.5Q267.9 51.6 269.4 50.9L271.3 49.9Q272.7 49.2 273.2 48.5L273.8 47.5Q274.3 46.8 272.4 46.7L269.8 46.6Q267.9 46.5 266.7 45.9L265.2 45.1Q264.0 44.4 265.6 43.7L267.8 42.8ZM389.9 98.1Q392.5 97.8 396.2 97.4L401.2 96.9Q405.0 96.5 405.6 97.6L406.4 99.1Q407.0 100.2 404.9 101.4L402.1 102.9Q400.0 104.0 397.8 104.8L394.8 105.8Q392.5 106.5 390.6 105.8L388.1 104.8Q386.2 104.0 385.5 102.5L384.5 100.5Q383.8 99.0 386.4 98.6L389.9 98.1ZM131.2 176.4Q131.2 171.5 132.4 170.8L133.9 169.8Q135.0 169.0 134.2 167.5L133.2 165.5Q132.5 164.0 130.2 162.5L127.2 160.5Q125.0 159.0 123.5 157.5L121.5 155.5Q120.0 154.0 119.2 151.8L118.2 148.8Q117.5 146.5 116.0 145.0L114.0 143.0Q112.5 141.5 111.4 139.2L109.9 136.2Q108.8 134.0 107.2 132.5L105.2 130.5Q103.8 129.0 102.2 127.9L100.2 126.4Q98.8 125.2 96.1 124.5L92.6 123.5Q90.0 122.8 87.0 122.0L83.0 121.0Q80.0 120.2 77.4 119.5L73.9 118.5Q71.2 117.8 69.8 117.4L67.8 116.9Q66.2 116.5 65.5 118.0L64.5 120.0Q63.8 121.5 63.0 120.8L62.0 119.8Q61.2 119.0 60.1 120.5L58.6 122.5Q57.5 124.0 55.2 126.2L52.2 129.2Q50.0 131.5 47.8 133.0L44.8 135.0Q42.5 136.5 40.2 137.6L37.2 139.1Q35.0 140.2 36.5 138.8L38.5 136.8Q40.0 135.2 41.9 133.4L44.4 130.9Q46.2 129.0 46.6 128.2L47.1 127.2Q47.5 126.5 45.2 126.1L42.2 125.6Q40.0 125.2 37.8 124.1L34.8 122.6Q32.5 121.5 31.4 120.0L29.9 118.0Q28.8 116.5 29.5 115.0L30.5 113.0Q31.2 111.5 33.1 110.4L35.6 108.9Q37.5 107.8 37.9 106.6L38.4 105.1Q38.8 104.0 36.9 103.6L34.4 103.1Q32.5 102.8 30.2 102.4L27.2 101.9Q25.0 101.5 24.6 100.4L24.1 98.9Q23.8 97.8 25.6 97.2L28.1 96.5Q30.0 96.0 32.2 95.8L35.2 95.5Q37.5 95.2 36.4 93.8L34.9 91.8Q33.8 90.2 31.5 88.8L28.5 86.8Q26.2 85.2 28.5 84.3L31.5 83.0Q33.8 82.0 36.8 80.2L40.8 77.8Q43.8 76.0 46.4 75.6L49.9 75.1Q52.5 74.8 55.5 75.9L59.5 77.4Q62.5 78.5 66.2 78.7L71.2 78.8Q75.0 79.0 78.8 79.6L83.8 80.4Q87.5 81.0 91.6 81.9L97.1 83.1Q101.2 84.0 103.9 83.6L107.4 83.1Q110.0 82.8 113.0 81.8L117.0 80.5Q120.0 79.5 123.0 80.1L127.0 80.9Q130.0 81.5 133.0 82.2L137.0 83.2Q140.0 84.0 143.0 84.6L147.0 85.4Q150.0 86.0 149.9 85.7L149.8 85.4Q149.8 85.1 150.4 86.2L151.3 87.7Q152.0 88.8 154.0 89.3L156.7 89.9Q158.7 90.3 160.9 90.8L163.9 91.4Q166.1 91.8 167.0 92.7L168.2 93.9Q169.1 94.8 169.8 93.4L170.7 91.6Q171.3 90.3 173.8 90.1L177.1 89.8Q179.5 89.6 182.2 89.8L185.8 90.1Q188.5 90.3 190.2 90.0L192.6 89.5Q194.4 89.1 196.1 86.6L198.3 83.3Q200.0 80.9 200.5 80.5L201.2 80.0Q201.7 79.6 201.6 78.8L201.4 77.7Q201.3 76.9 201.8 76.3L202.5 75.4Q203.1 74.7 204.0 74.5L205.2 74.3Q206.1 74.0 207.0 74.5L208.3 75.2Q209.2 75.6 209.5 76.5L210.0 77.8Q210.3 78.7 210.1 79.5L209.8 80.5Q209.6 81.3 210.5 81.8L211.8 82.5Q212.7 83.1 213.1 84.0L213.6 85.2Q214.0 86.1 214.7 86.4L215.5 86.7Q216.2 87.0 216.6 86.1L217.1 84.9Q217.5 83.9 218.2 83.8L219.0 83.6Q219.7 83.5 220.2 84.5L220.9 85.9Q221.4 87.0 222.0 88.3L222.7 90.1Q223.2 91.4 223.8 91.5L224.7 91.7Q225.4 91.8 226.2 90.6L227.2 89.1Q228.0 87.9 228.1 86.8L228.3 85.4Q228.4 84.4 229.1 83.9L230.0 83.3Q230.6 82.8 231.8 83.0L233.4 83.3Q234.6 83.5 235.1 84.3L235.8 85.3Q236.3 86.1 236.2 87.2L236.0 88.6Q235.9 89.6 236.4 90.3L237.1 91.2Q237.6 91.8 237.2 92.5L236.7 93.3Q236.3 94.0 235.1 94.4L233.6 94.9Q232.4 95.3 231.1 95.6L229.3 95.9Q228.0 96.2 227.5 96.6L226.8 97.1Q226.2 97.5 227.0 98.3L228.1 99.3Q228.9 100.1 230.2 100.9L231.9 102.0Q233.2 102.7 234.3 103.5L235.7 104.6Q236.7 105.4 237.4 106.2L238.3 107.2Q238.9 108.0 238.3 108.1L237.4 108.3Q236.7 108.4 235.8 107.9L234.6 107.2Q233.7 106.7 233.0 107.1L232.2 107.6Q231.5 108.0 230.7 108.8L229.7 109.8Q228.9 110.6 227.8 110.2L226.4 109.7Q225.4 109.3 225.1 108.9L224.8 108.4Q224.5 108.0 225.0 106.9L225.7 105.5Q226.2 104.5 226.0 103.4L225.6 102.0Q225.4 101.0 224.6 100.5L223.5 99.8Q222.7 99.2 221.6 99.2L220.0 99.2Q218.8 99.2 218.4 99.6L217.9 100.2Q217.5 100.6 218.8 101.0L220.6 101.5Q221.9 101.9 222.4 102.3L223.1 102.8Q223.6 103.2 223.1 103.8L222.4 104.7Q221.9 105.4 220.6 105.8L218.8 106.3Q217.5 106.7 216.4 106.9L215.0 107.3Q214.0 107.6 213.3 108.5L212.5 109.7Q211.8 110.6 210.9 111.9L209.7 113.7Q208.7 115.0 207.7 116.3L206.3 118.1Q205.2 119.4 204.7 121.0L204.0 123.3Q203.5 125.0 204.7 125.4L206.3 126.0Q207.5 126.5 209.0 128.8L211.0 131.8Q212.5 134.0 215.5 135.5L219.5 137.5Q222.5 139.0 225.5 140.1L229.5 141.6Q232.5 142.8 233.2 145.4L234.2 148.9Q235.0 151.5 236.9 153.4L239.4 155.9Q241.2 157.8 242.4 155.1L243.9 151.6Q245.0 149.0 245.4 146.0L245.9 142.0Q246.2 139.0 246.6 136.0L247.1 132.0Q247.5 129.0 247.1 126.0L246.6 122.0Q246.2 119.0 246.2 118.8L246.0 118.6Q245.9 118.5 246.5 117.3L247.2 115.7Q247.7 114.6 248.6 114.0L249.8 113.3Q250.7 112.8 252.3 112.8L254.4 112.8Q256.0 112.8 257.3 113.5L259.1 114.3Q260.4 115.0 261.4 115.8L262.8 116.8Q263.9 117.6 264.7 118.1L265.7 118.8Q266.5 119.4 266.1 120.3L265.6 121.5Q265.2 122.4 266.3 123.7L267.7 125.3Q268.8 126.5 270.2 126.9L272.2 127.4Q273.8 127.8 274.9 126.6L276.4 125.1Q277.5 124.0 278.5 124.3L279.8 124.7Q280.8 125.0 282.3 127.3L284.2 130.5Q285.6 132.9 287.0 134.8L288.9 137.3Q290.3 139.2 292.2 140.4L294.8 142.0Q296.7 143.2 296.2 143.9L295.6 144.8Q295.1 145.6 293.9 146.0L292.3 146.7Q291.1 147.1 292.3 147.6L293.9 148.3Q295.1 148.7 296.8 148.5L299.0 148.2Q300.6 147.9 300.9 149.6L301.2 151.8Q301.4 153.5 299.5 154.4L297.0 155.7Q295.1 156.7 293.2 157.1L290.6 157.8Q288.7 158.2 286.4 158.5L283.2 158.8Q280.8 159.0 278.9 159.5L276.4 160.1Q274.5 160.6 272.6 162.0L270.0 163.9Q268.1 165.4 267.2 166.6L265.9 168.1Q265.0 169.3 266.4 169.0L268.3 168.4Q269.7 168.1 271.6 167.3L274.2 166.2Q276.1 165.4 277.3 165.6L278.8 165.9Q280.0 166.2 280.7 167.8L281.7 170.0Q282.4 171.7 284.1 171.9L286.3 172.3Q288.0 172.5 288.9 172.6L290.2 172.7Q291.1 172.8 289.5 173.9L287.2 175.4Q285.6 176.5 283.4 177.7L280.6 179.2Q278.4 180.4 277.3 180.0L275.7 179.3Q274.5 178.8 273.1 179.3L271.2 180.0Q269.7 180.4 268.3 181.4L266.4 182.6Q265.0 183.6 264.5 185.0L263.9 186.9Q263.4 188.4 262.0 189.3L260.1 190.6Q258.6 191.5 257.2 192.9L255.3 194.8Q253.9 196.3 252.9 197.1L251.7 198.2Q250.7 199.0 250.5 200.5L250.2 202.5Q250.0 204.0 248.9 205.5L247.4 207.5Q246.2 209.0 245.1 210.9L243.6 213.4Q242.5 215.2 241.4 216.8L239.9 218.8Q238.8 220.2 238.0 221.4L237.0 222.9Q236.2 224.0 236.6 225.9L237.1 228.4Q237.5 230.2 238.2 232.5L239.2 235.5Q240.0 237.8 239.6 238.9L239.1 240.4Q238.8 241.5 238.0 240.0L237.0 238.0Q236.2 236.5 235.5 234.6L234.5 232.1Q233.8 230.2 232.6 228.8L231.1 226.8Q230.0 225.2 228.1 225.0L225.6 224.7Q223.8 224.5 221.9 225.5L219.4 226.8Q217.5 227.8 215.6 228.5L213.1 229.5Q211.2 230.2 209.4 230.0L206.9 229.7Q205.0 229.5 203.5 230.5L201.5 231.8Q200.0 232.8 199.1 234.6L197.9 237.1Q197.0 239.0 196.8 241.2L196.5 244.2Q196.2 246.5 196.6 248.8L197.1 251.8Q197.5 254.0 198.6 255.5L200.1 257.5Q201.2 259.0 203.1 259.8L205.6 260.8Q207.5 261.5 209.4 260.8L211.9 259.8Q213.8 259.0 214.1 257.5L214.6 255.5Q215.0 254.0 216.5 253.6L218.5 253.1Q220.0 252.8 221.1 253.5L222.6 254.5Q223.8 255.2 223.4 257.1L222.9 259.6Q222.5 261.5 222.1 263.4L221.6 265.9Q221.2 267.8 221.6 268.9L222.1 270.4Q222.5 271.5 224.0 271.1L226.0 270.6Q227.5 270.2 228.6 271.0L230.1 272.0Q231.2 272.8 231.6 274.6L232.1 277.1Q232.5 279.0 232.9 280.9L233.4 283.4Q233.8 285.2 234.9 286.4L236.4 287.9Q237.5 289.0 239.0 288.6L241.0 288.1Q242.5 287.8 244.0 288.5L246.0 289.5Q247.5 290.2 248.6 289.9L250.1 289.4Q251.2 289.0 252.8 287.5L254.8 285.5Q256.2 284.0 257.4 283.2L258.9 282.2Q260.0 281.5 261.1 281.9L262.6 282.4Q263.8 282.8 265.6 283.1L268.1 283.6Q270.0 284.0 273.0 284.4L277.0 284.9Q280.0 285.2 281.9 285.6L284.4 286.1Q286.2 286.5 287.4 287.6L288.9 289.1Q290.0 290.2 291.5 291.8L293.5 293.8Q295.0 295.2 296.5 296.4L298.5 297.9Q300.0 299.0 302.2 300.1L305.2 301.6Q307.5 302.8 309.0 304.6L311.0 307.1Q312.5 309.0 312.9 310.5L313.4 312.5Q313.8 314.0 315.6 315.5L318.1 317.5Q320.0 319.0 323.0 320.5L327.0 322.5Q330.0 324.0 333.0 324.8L337.0 325.8Q340.0 326.5 342.2 327.6L345.2 329.1Q347.5 330.2 349.0 332.1L351.0 334.6Q352.5 336.5 352.5 336.9L352.5 337.4Q352.5 337.8 351.8 340.0L350.8 343.0Q350.0 345.2 348.5 347.1L346.5 349.6Q345.0 351.5 344.2 353.8L343.2 356.8Q342.5 359.0 342.5 361.6L342.5 365.1Q342.5 367.8 341.8 370.4L340.8 373.9Q340.0 376.5 338.9 378.4L337.4 380.9Q336.2 382.8 334.4 383.5L331.9 384.5Q330.0 385.2 328.1 386.4L325.6 387.9Q323.8 389.0 321.9 390.5L319.4 392.5Q317.5 394.0 317.4 395.9L317.1 398.4Q317.0 400.2 316.0 402.5L314.7 405.5Q313.8 407.8 312.2 410.4L310.2 413.9Q308.8 416.5 307.2 418.0L305.2 420.0Q303.8 421.5 301.9 421.6L299.4 421.9Q297.5 422.0 296.4 421.5L294.9 420.8Q293.8 420.2 294.9 422.1L296.4 424.6Q297.5 426.5 297.1 428.0L296.6 430.0Q296.2 431.5 294.4 432.4L291.9 433.6Q290.0 434.5 288.5 434.7L286.5 435.0Q285.0 435.2 284.2 436.8L283.2 438.8Q282.5 440.2 281.0 441.0L279.0 442.0Q277.5 442.8 277.9 444.2L278.4 446.2Q278.8 447.8 277.6 448.9L276.1 450.4Q275.0 451.5 275.4 452.9L275.9 454.6Q276.2 456.0 275.1 456.9L273.6 458.1Q272.5 459.0 272.4 460.5L272.1 462.5Q272.0 464.0 272.9 464.8L274.1 465.8Q275.0 466.5 273.9 468.4L272.4 470.9Q271.2 472.8 270.1 474.6L268.6 477.1Q267.5 479.0 266.8 480.5L265.8 482.5Q265.0 484.0 266.9 485.5L269.4 487.5Q271.2 489.0 272.0 489.9L273.0 491.1Q273.8 492.0 271.9 492.4L269.4 493.1Q267.5 493.5 265.2 492.5L262.2 491.2Q260.0 490.2 258.5 488.8L256.5 486.8Q255.0 485.2 254.6 483.4L254.1 480.9Q253.8 479.0 254.1 476.0L254.6 472.0Q255.0 469.0 254.6 466.8L254.1 463.8Q253.8 461.5 254.5 459.2L255.5 456.2Q256.2 454.0 255.9 451.0L255.4 447.0Q255.0 444.0 255.4 441.0L255.9 437.0Q256.2 434.0 257.0 431.4L258.0 427.9Q258.8 425.2 259.9 422.6L261.4 419.1Q262.5 416.5 262.5 412.8L262.5 407.8Q262.5 404.0 262.9 399.5L263.4 393.5Q263.8 389.0 264.0 384.1L264.3 377.6Q264.5 372.8 261.6 370.5L257.9 367.5Q255.0 365.2 253.1 363.4L250.6 360.9Q248.8 359.0 247.6 356.0L246.1 352.0Q245.0 349.0 243.9 346.0L242.4 342.0Q241.2 339.0 240.5 336.4L239.5 332.9Q238.8 330.2 239.1 326.9L239.6 322.4Q240.0 319.0 239.6 320.5L239.1 322.5Q238.8 324.0 239.5 321.0L240.5 317.0Q241.2 314.0 242.4 311.0L243.9 307.0Q245.0 304.0 245.8 301.4L246.8 297.9Q247.5 295.2 246.4 294.1L244.9 292.6Q243.8 291.5 241.9 291.5L239.4 291.5Q237.5 291.5 235.6 290.8L233.1 289.8Q231.2 289.0 230.1 287.5L228.6 285.5Q227.5 284.0 226.0 282.5L224.0 280.5Q222.5 279.0 220.6 277.9L218.1 276.4Q216.2 275.2 214.4 274.1L211.9 272.6Q210.0 271.5 207.4 270.8L203.9 269.8Q201.2 269.0 199.4 268.2L196.9 267.2Q195.0 266.5 192.0 265.0L188.0 263.0Q185.0 261.5 182.8 260.0L179.8 258.0Q177.5 256.5 176.9 254.6L176.1 252.1Q175.5 250.2 174.3 248.4L172.7 245.9Q171.5 244.0 170.4 241.8L169.1 238.8Q168.0 236.5 166.9 234.8L165.6 232.7Q164.5 231.0 163.4 229.2L162.1 226.8Q161.0 225.0 159.8 223.7L158.2 222.0Q157.0 220.8 154.9 219.9L152.1 218.8Q150.0 218.0 148.5 217.2L146.5 216.1Q145.0 215.2 143.5 213.4L141.5 210.9Q140.0 209.0 138.5 206.8L136.5 203.8Q135.0 201.5 133.9 199.2L132.4 196.2Q131.2 194.0 131.2 192.1L131.2 189.6Q131.2 187.8 131.2 187.8L131.2 187.8Q131.2 187.8 131.2 182.9L131.2 176.4ZM149.9 221.8Q151.0 224.2 152.1 226.3L153.4 229.2Q154.5 231.2 154.7 232.4L154.8 233.9Q155.0 235.0 156.3 236.4L158.0 238.3Q159.2 239.8 159.9 241.2L160.8 243.1Q161.5 244.5 163.0 245.6L165.0 246.9Q166.5 248.0 165.8 246.6L164.8 244.7Q164.0 243.2 162.9 241.1L161.6 238.2Q160.5 236.0 159.4 233.9L157.9 231.1Q156.8 229.0 156.2 227.3L155.3 225.2Q154.8 223.5 154.2 222.0L153.5 220.0Q153.0 218.5 151.3 217.8L149.2 216.8Q147.5 216.0 148.6 218.5L149.9 221.8ZM234.4 248.5Q236.2 247.8 238.9 248.5L242.4 249.5Q245.0 250.2 247.2 251.4L250.2 252.9Q252.5 254.0 252.9 254.9L253.4 256.1Q253.8 257.0 251.9 256.7L249.4 256.3Q247.5 256.0 245.2 255.0L242.2 253.7Q240.0 252.8 238.1 252.8L235.6 252.8Q233.8 252.8 233.0 253.1L232.0 253.6Q231.2 254.0 230.9 252.9L230.4 251.4Q230.0 250.2 231.9 249.5L234.4 248.5ZM263.1 259.2Q265.0 259.0 266.5 259.6L268.5 260.4Q270.0 261.0 268.5 261.5L266.5 262.2Q265.0 262.8 263.5 262.5L261.5 262.2Q260.0 262.0 259.6 261.3L259.1 260.4Q258.8 259.8 260.6 259.5L263.1 259.2ZM246.6 261.5Q247.5 261.2 248.1 261.7L248.9 262.3Q249.5 262.8 248.9 263.2L248.1 263.8Q247.5 264.2 246.6 264.1L245.4 263.9Q244.5 263.8 244.5 263.2L244.5 262.5Q244.5 262.0 245.4 261.8L246.6 261.5ZM299.5 159.7Q301.4 159.0 302.4 159.7L303.6 160.7Q304.6 161.4 305.5 162.6L306.8 164.2Q307.8 165.4 308.0 166.6L308.3 168.1Q308.6 169.3 307.4 169.8L305.8 170.4Q304.6 170.9 303.2 170.7L301.3 170.4Q299.8 170.1 298.4 169.2L296.5 167.9Q295.1 167.0 294.6 166.2L294.0 165.3Q293.5 164.6 294.0 163.6L294.6 162.4Q295.1 161.4 297.0 160.7L299.5 159.7ZM347.1 489.0Q348.0 488.8 348.9 489.3L350.1 490.0Q351.0 490.5 350.1 490.9L348.9 491.6Q348.0 492.0 347.2 491.7L346.2 491.3Q345.5 491.0 345.4 490.6L345.1 489.9Q345.0 489.5 345.9 489.3L347.1 489.0Z" fill="#000" stroke="#000" stroke-width="0.6" stroke-linejoin="round"/><path d="M133.2 65.5Q134.1 63.5 135.7 62.9L137.8 62.0Q139.3 61.3 141.4 61.5L144.0 61.8Q146.0 62.0 147.6 62.5L149.7 63.1Q151.2 63.5 150.8 64.6L150.2 66.1Q149.8 67.2 148.4 67.9L146.6 68.8Q145.3 69.5 144.0 70.4L142.2 71.6Q140.8 72.5 139.5 72.9L137.7 73.5Q136.4 73.9 135.3 73.7L133.8 73.4Q132.6 73.2 132.2 72.3L131.6 71.1Q131.2 70.2 132.1 68.2L133.2 65.5ZM150.7 68.1Q152.0 67.2 153.6 67.9L155.6 68.8Q157.2 69.5 159.0 69.0L161.4 68.4Q163.2 68.0 164.9 68.4L167.3 69.0Q169.1 69.5 170.4 68.6L172.2 67.4Q173.6 66.5 174.7 65.8L176.2 64.9Q177.3 64.3 177.7 65.8L178.3 67.9Q178.8 69.5 179.4 71.0L180.3 73.1Q181.0 74.7 182.4 75.8L184.1 77.3Q185.5 78.4 185.9 79.3L186.5 80.5Q187.0 81.4 185.6 81.6L183.8 81.9Q182.5 82.1 183.4 83.0L184.6 84.2Q185.5 85.1 183.7 84.9L181.3 84.6Q179.5 84.4 177.3 83.7L174.3 82.8Q172.1 82.1 169.9 81.9L166.9 81.6Q164.6 81.4 162.4 81.6L159.4 81.9Q157.2 82.1 155.4 81.7L153.0 81.1Q151.2 80.6 152.6 79.7L154.4 78.6Q155.7 77.7 157.3 77.4L159.4 77.1Q160.9 76.9 160.3 76.2L159.4 75.4Q158.7 74.7 156.7 74.5L154.0 74.2Q152.0 73.9 151.1 73.5L149.9 72.9Q149.0 72.5 148.6 71.8L148.0 70.9Q147.5 70.2 148.9 69.3L150.7 68.1ZM140.5 50.7Q142.3 49.4 144.6 48.7L147.5 47.8Q149.8 47.2 149.1 48.0L148.2 49.2Q147.5 50.1 146.4 50.8L144.9 51.7Q143.8 52.4 142.5 53.0L140.7 53.9Q139.3 54.6 138.5 54.4L137.3 54.1Q136.4 53.9 138.2 52.5L140.5 50.7ZM154.4 53.6Q155.7 53.1 157.5 53.8L159.9 54.7Q161.7 55.3 163.5 55.1L165.8 54.8Q167.6 54.6 168.3 53.7L169.2 52.5Q169.9 51.6 170.5 52.7L171.4 54.2Q172.1 55.3 173.2 55.6L174.7 55.9Q175.8 56.1 174.2 56.8L172.2 57.6Q170.6 58.3 168.8 58.5L166.4 58.8Q164.6 59.1 163.3 59.5L161.5 60.1Q160.2 60.5 158.8 59.9L157.1 59.0Q155.7 58.3 154.6 57.9L153.1 57.3Q152.0 56.8 151.8 56.2L151.5 55.3Q151.2 54.6 152.6 54.1L154.4 53.6ZM161.1 42.8Q162.4 41.9 163.8 41.9L165.5 41.9Q166.9 41.9 165.8 42.8L164.3 44.0Q163.2 44.9 162.3 45.4L161.1 46.0Q160.2 46.4 159.5 46.0L158.6 45.4Q157.9 44.9 159.3 44.0L161.1 42.8ZM181.2 36.5Q182.5 36.7 183.8 37.6L185.6 38.8Q187.0 39.7 188.3 41.1L190.1 42.8Q191.4 44.2 190.5 44.0L189.3 43.7Q188.5 43.4 187.1 42.5L185.3 41.4Q184.0 40.5 182.9 40.0L181.4 39.4Q180.3 39.0 179.6 38.1L178.7 36.9Q178.0 36.0 179.4 36.2L181.2 36.5ZM188.3 51.3Q189.2 50.9 190.3 51.3L191.8 51.9Q192.9 52.4 193.4 53.3L194.0 54.4Q194.4 55.3 194.0 56.0L193.4 56.9Q192.9 57.6 191.8 57.3L190.3 57.1Q189.2 56.8 188.5 56.4L187.6 55.8Q187.0 55.3 186.7 54.4L186.4 53.3Q186.2 52.4 187.1 51.9L188.3 51.3ZM190.1 66.9Q191.4 66.5 192.5 65.6L194.0 64.4Q195.1 63.5 196.0 63.3L197.2 63.0Q198.1 62.8 197.9 64.3L197.6 66.4Q197.4 68.0 198.3 68.9L199.5 70.1Q200.4 71.0 199.5 71.9L198.3 73.0Q197.4 73.9 196.0 73.5L194.3 72.9Q192.9 72.5 192.0 71.8L190.8 70.9Q189.9 70.2 189.0 69.6L187.9 68.7Q187.0 68.0 188.3 67.5L190.1 66.9ZM207.9 63.2Q209.3 62.8 210.6 62.8L212.4 62.8Q213.8 62.8 212.9 63.7L211.7 64.9Q210.8 65.8 209.9 66.9L208.7 68.4Q207.8 69.5 207.1 70.4L206.2 71.6Q205.6 72.5 205.3 71.1L205.0 69.3Q204.8 68.0 204.8 66.9L204.8 65.4Q204.8 64.3 206.2 63.8L207.9 63.2ZM242.7 64.5Q243.7 64.2 245.1 64.8L246.8 65.5Q248.1 66.0 247.3 66.4L246.3 66.9Q245.5 67.3 244.4 67.3L243.0 67.3Q242.0 67.3 241.5 66.7L240.8 65.8Q240.2 65.1 241.3 64.9L242.7 64.5ZM197.8 81.6Q198.9 81.4 200.2 82.1L202.0 82.9Q203.3 83.6 204.2 83.4L205.4 83.1Q206.3 82.9 205.9 84.2L205.3 86.0Q204.8 87.3 203.5 87.1L201.7 86.8Q200.4 86.6 199.2 86.1L197.8 85.5Q196.6 85.1 196.2 84.2L195.6 83.0Q195.1 82.1 196.3 81.9L197.8 81.6ZM204.5 50.7Q206.3 50.9 208.1 51.8L210.5 53.0Q212.3 53.9 213.2 54.7L214.3 55.9Q215.2 56.8 217.9 57.1L221.5 57.3Q224.2 57.6 226.8 57.3L230.4 57.1Q233.1 56.8 235.8 56.4L239.3 55.8Q242.0 55.3 242.0 56.5L242.0 57.9Q242.0 59.1 239.8 59.5L236.8 60.1Q234.6 60.5 231.5 60.8L227.3 61.1Q224.2 61.3 221.5 60.8L217.9 60.3Q215.2 59.8 213.9 59.1L212.1 58.2Q210.8 57.6 209.4 56.7L207.6 55.5Q206.3 54.6 205.0 53.9L203.2 53.0Q201.8 52.4 201.4 51.7L200.8 50.8Q200.4 50.1 202.1 50.4L204.5 50.7ZM207.5 28.9Q209.3 27.8 211.1 28.3L213.5 28.9Q215.2 29.3 216.6 30.4L218.4 31.9Q219.7 33.0 220.6 34.4L221.8 36.1Q222.7 37.5 223.8 38.6L225.3 40.1Q226.4 41.2 225.7 41.6L224.8 42.2Q224.2 42.7 222.4 42.0L220.0 41.1Q218.2 40.5 216.7 40.7L214.6 41.0Q213.0 41.2 211.9 40.1L210.4 38.6Q209.3 37.5 208.4 36.8L207.2 35.9Q206.3 35.2 205.4 34.1L204.2 32.6Q203.3 31.5 205.1 30.4L207.5 28.9ZM222.2 44.1Q224.2 43.4 226.0 43.7L228.3 44.0Q230.1 44.2 231.9 45.1L234.3 46.3Q236.1 47.2 238.3 47.4L241.3 47.7Q243.5 47.9 242.6 49.0L241.4 50.5Q240.5 51.6 238.3 51.6L235.3 51.6Q233.1 51.6 230.9 51.4L227.9 51.1Q225.7 50.9 223.9 50.4L221.5 49.8Q219.7 49.4 218.8 48.9L217.6 48.3Q216.7 47.9 216.9 47.2L217.2 46.3Q217.5 45.7 219.5 45.0L222.2 44.1ZM220.6 20.5Q224.2 19.6 227.7 18.1L232.5 16.0Q236.1 14.4 239.6 13.5L244.4 12.3Q248.0 11.4 251.5 11.7L256.3 12.0Q259.9 12.2 263.0 12.2L267.2 12.2Q270.3 12.2 272.5 13.1L275.5 14.3Q277.7 15.2 280.2 15.6L283.5 16.2Q285.9 16.6 285.3 17.8L284.4 19.3Q283.7 20.4 281.5 21.5L278.5 23.0Q276.2 24.1 274.0 25.2L271.0 26.7Q268.8 27.8 267.0 28.9L264.6 30.4Q262.9 31.5 261.5 32.6L259.7 34.1Q258.4 35.2 256.6 36.4L254.2 37.9Q252.4 39.0 250.7 39.9L248.3 41.1Q246.5 41.9 244.3 42.4L241.3 43.0Q239.0 43.4 237.3 42.8L234.9 41.9Q233.1 41.2 231.3 40.3L228.9 39.1Q227.1 38.2 226.3 36.9L225.1 35.1Q224.2 33.8 225.5 33.1L227.3 32.2Q228.6 31.5 230.9 31.8L233.8 32.1Q236.1 32.3 238.3 31.4L241.3 30.2Q243.5 29.3 244.9 28.4L246.6 27.2Q248.0 26.3 247.1 25.7L245.9 24.8Q245.0 24.1 242.8 25.0L239.8 26.2Q237.6 27.1 235.3 27.3L232.4 27.6Q230.1 27.8 228.3 27.4L226.0 26.8Q224.2 26.3 222.4 25.7L220.0 24.8Q218.2 24.1 216.4 23.6L214.0 23.0Q212.3 22.6 215.8 21.7L220.6 20.5Z" fill="#000" stroke="#000" stroke-width="1.8" stroke-linejoin="round"/><path d="M430.0 205.3Q430.7 204.4 432.6 203.7L435.2 202.7Q437.0 202.0 438.5 201.3L440.4 200.4Q441.8 199.7 442.2 198.3L442.9 196.4Q443.3 194.9 444.3 194.0L445.6 192.7Q446.5 191.8 447.7 190.6L449.3 189.0Q450.4 187.9 451.1 186.7L452.1 185.1Q452.8 183.9 454.2 183.4L456.1 182.8Q457.5 182.3 459.4 181.9L461.9 181.2Q463.8 180.8 465.0 181.5L466.6 182.4Q467.8 183.1 468.5 184.1L469.4 185.3Q470.1 186.3 471.1 187.2L472.3 188.5Q473.3 189.4 474.7 190.4L476.6 191.6Q478.0 192.6 479.4 193.5L481.3 194.8Q482.7 195.7 483.2 196.9L483.8 198.5Q484.3 199.7 485.7 200.1L487.6 200.8Q489.0 201.2 490.4 200.8L492.3 200.1Q493.7 199.7 494.7 199.9L495.9 200.2Q496.9 200.5 497.8 199.3L499.1 197.7Q500.0 196.5 501.0 195.3L502.2 193.8Q503.2 192.6 505.1 192.3L507.6 192.0Q509.5 191.8 510.0 192.5L510.6 193.4Q511.1 194.2 510.8 195.8L510.5 198.0Q510.3 199.7 511.0 200.9L511.9 202.4Q512.6 203.6 514.5 204.1L517.0 204.7Q518.9 205.2 521.3 204.9L524.4 204.6Q526.8 204.4 528.5 204.4L530.7 204.4Q532.3 204.4 532.1 206.3L531.8 208.8Q531.5 210.7 531.1 212.6L530.4 215.1Q530.0 217.0 529.3 218.9L528.3 221.4Q527.6 223.3 526.4 223.5L524.8 223.8Q523.7 224.1 521.8 223.8L519.3 223.5Q517.4 223.3 515.5 222.8L513.0 222.2Q511.1 221.7 508.7 221.2L505.6 220.6Q503.2 220.1 501.3 219.9L498.8 219.6Q496.9 219.4 495.9 220.3L494.7 221.6Q493.7 222.5 492.8 223.4L491.5 224.7Q490.6 225.7 489.2 225.2L487.3 224.6Q485.9 224.1 484.4 223.4L482.6 222.4Q481.1 221.7 479.7 221.0L477.8 220.1Q476.4 219.4 475.0 218.6L473.1 217.7Q471.7 217.0 470.7 216.0L469.5 214.8Q468.5 213.8 468.8 212.4L469.1 210.5Q469.3 209.1 469.1 207.9L468.8 206.4Q468.5 205.2 467.1 204.9L465.2 204.6Q463.8 204.4 461.9 204.5L459.4 204.6Q457.5 204.7 455.6 205.0L453.1 205.4Q451.2 205.7 449.3 206.2L446.8 207.0Q444.9 207.5 443.0 208.0L440.5 208.6Q438.6 209.1 436.7 209.5L434.2 210.0Q432.3 210.4 431.4 210.2L430.1 210.0Q429.2 209.9 428.9 209.2L428.6 208.3Q428.4 207.5 429.1 206.6L430.0 205.3ZM474.5 173.7Q475.6 172.9 477.2 173.9L479.3 175.3Q480.8 176.4 482.3 177.8L484.4 179.7Q485.9 181.1 487.4 182.5L489.4 184.4Q490.9 185.8 492.0 187.4L493.4 189.4Q494.5 191.0 495.0 192.3L495.6 194.0Q496.1 195.3 495.8 196.9L495.3 199.0Q495.0 200.6 493.8 200.4L492.1 200.2Q490.9 200.0 490.0 198.1L488.7 195.6Q487.8 193.7 486.4 192.5L484.6 190.8Q483.2 189.6 481.9 188.5L480.1 187.1Q478.8 186.0 477.5 184.5L475.8 182.6Q474.5 181.1 473.8 179.5L472.8 177.3Q472.0 175.7 473.1 174.9L474.5 173.7ZM514.0 183.2Q514.2 181.6 515.2 179.9L516.4 177.7Q517.4 176.0 518.8 174.9L520.7 173.3Q522.1 172.1 523.3 171.9L524.8 171.6Q526.0 171.3 526.7 172.3L527.7 173.5Q528.4 174.5 529.3 173.8L530.6 172.8Q531.5 172.1 533.0 171.6L534.8 171.0Q536.3 170.5 537.0 170.8L537.9 171.1Q538.6 171.3 538.1 172.3L537.5 173.5Q537.0 174.5 537.8 175.4L538.7 176.7Q539.4 177.6 540.8 178.8L542.7 180.4Q544.1 181.6 545.0 182.7L546.1 184.3Q547.0 185.5 546.6 186.7L546.1 188.3Q545.7 189.4 544.3 189.8L542.4 190.2Q541.0 190.5 539.1 190.1L536.6 189.4Q534.7 189.0 532.8 188.6L530.3 188.2Q528.4 187.9 527.0 188.0L525.1 188.2Q523.7 188.3 522.2 189.0L520.4 189.9Q518.9 190.5 517.8 190.9L516.2 191.4Q515.0 191.8 514.3 191.3L513.3 190.7Q512.6 190.2 512.9 189.3L513.2 188.0Q513.4 187.1 513.7 185.4L514.0 183.2ZM565.2 174.9Q566.2 173.7 567.6 173.1L569.5 172.3Q570.9 171.6 572.1 171.8L573.7 172.0Q574.8 172.1 574.6 173.1L574.3 174.3Q574.1 175.3 573.3 176.0L572.4 176.9Q571.7 177.6 572.2 179.0L572.8 180.9Q573.3 182.3 574.0 183.8L574.9 185.7Q575.6 187.1 576.3 188.0L577.3 189.3Q578.0 190.2 577.3 190.7L576.3 191.3Q575.6 191.8 576.1 193.2L576.7 195.1Q577.2 196.5 577.0 198.2L576.7 200.4Q576.4 202.0 575.5 202.7L574.2 203.7Q573.3 204.4 571.9 204.2L570.0 203.8Q568.5 203.6 567.8 202.7L566.9 201.4Q566.2 200.5 566.6 199.0L567.1 197.1Q567.4 195.7 567.3 194.3L567.1 192.4Q567.0 191.0 567.4 189.8L568.1 188.3Q568.5 187.1 567.8 185.9L566.9 184.3Q566.2 183.1 565.5 182.4L564.5 181.5Q563.8 180.8 563.6 179.8L563.3 178.6Q563.0 177.6 564.0 176.4L565.2 174.9ZM592.4 175.2Q593.0 174.5 593.4 174.7L594.1 175.0Q594.5 175.3 594.3 176.2L594.0 177.5Q593.7 178.4 593.1 178.9L592.3 179.5Q591.7 180.0 591.5 179.0L591.3 177.8Q591.1 176.8 591.6 176.1L592.4 175.2ZM526.1 229.0Q526.8 228.8 527.8 229.7L529.0 231.0Q530.0 232.0 530.7 233.1L531.6 234.7Q532.3 235.9 533.0 237.3L534.0 239.2Q534.7 240.6 535.4 242.0L536.3 243.9Q537.0 245.3 538.0 246.8L539.3 248.6Q540.2 250.1 541.1 252.0L542.4 254.5Q543.3 256.4 544.3 258.3L545.6 260.8Q546.5 262.7 547.4 264.1L548.7 266.0Q549.6 267.4 549.9 269.1L550.2 271.4Q550.4 273.1 553.3 275.2L557.1 278.1Q560.0 280.2 563.0 279.9L567.0 279.4Q570.0 279.0 570.4 280.3L570.9 282.0Q571.2 283.2 567.9 283.7L563.4 284.3Q560.0 284.8 557.8 284.4L554.8 283.9Q552.5 283.5 551.4 281.8L549.9 279.5Q548.8 277.8 546.9 274.6L544.4 270.5Q542.6 267.4 541.6 266.0L540.4 264.1Q539.4 262.7 538.5 260.8L537.2 258.3Q536.3 256.4 536.0 254.9L535.7 253.1Q535.5 251.6 534.5 250.0L533.3 247.8Q532.3 246.1 531.6 244.5L530.7 242.3Q530.0 240.6 529.3 239.2L528.3 237.3Q527.6 235.9 526.9 234.7L525.9 233.1Q525.2 232.0 525.0 231.2L524.7 230.3Q524.4 229.6 525.2 229.4L526.1 229.0ZM565.8 225.9Q567.0 225.7 568.1 226.6L569.7 227.9Q570.9 228.8 571.9 230.0L573.1 231.6Q574.1 232.7 575.0 233.7L576.3 234.9Q577.2 235.9 579.3 236.1L582.2 236.4Q584.3 236.7 584.8 237.4L585.4 238.3Q585.9 239.0 584.7 240.0L583.1 241.2Q581.9 242.2 581.0 242.7L579.7 243.3Q578.8 243.8 577.4 244.5L575.5 245.4Q574.1 246.1 573.3 245.9L572.4 245.6Q571.7 245.3 571.2 243.9L570.6 242.0Q570.1 240.6 569.4 239.2L568.5 237.3Q567.8 235.9 566.8 234.5L565.6 232.6Q564.6 231.2 564.1 229.7L563.5 227.9Q563.0 226.4 564.2 226.2L565.8 225.9ZM216.2 168.6Q217.5 167.8 218.5 167.0L219.9 166.0Q221.0 165.2 221.7 165.3L222.5 165.5Q223.2 165.6 224.0 166.3L225.0 167.2Q225.8 167.8 226.5 168.9L227.3 170.3Q228.0 171.3 228.3 171.9L228.7 172.7Q229.0 173.3 228.2 173.2L227.1 173.0Q226.2 172.8 225.5 172.3L224.4 171.6Q223.6 171.0 222.6 170.8L221.2 170.4Q220.1 170.2 219.1 170.3L217.7 170.5Q216.6 170.6 215.6 170.6L214.2 170.5Q213.1 170.4 214.4 169.6L216.2 168.6ZM223.5 176.3Q224.1 175.7 225.0 175.1L226.3 174.3Q227.3 173.8 227.7 173.9L228.3 174.2Q228.7 174.4 228.0 175.2L227.1 176.3Q226.4 177.2 226.0 178.4L225.5 180.1Q225.1 181.4 224.8 182.7L224.5 184.4Q224.2 185.7 223.9 186.3L223.5 187.1Q223.2 187.7 222.9 186.6L222.6 185.1Q222.4 184.0 222.4 182.2L222.3 179.7Q222.3 177.9 222.8 177.2L223.5 176.3ZM231.1 173.7Q231.9 173.9 232.9 174.3L234.1 174.7Q235.0 175.1 235.9 175.3L237.1 175.5Q238.1 175.7 238.5 176.1L239.1 176.6Q239.5 177.0 239.3 177.7L238.9 178.7Q238.7 179.4 238.1 180.4L237.3 181.8Q236.7 182.9 236.3 182.4L235.8 181.8Q235.3 181.4 234.8 180.6L234.2 179.5Q233.7 178.7 233.2 178.0L232.5 177.0Q231.9 176.3 231.4 175.9L230.7 175.4Q230.2 175.0 229.9 174.4L229.6 173.6Q229.3 173.1 230.1 173.3L231.1 173.7ZM237.9 186.7Q239.4 185.7 241.2 184.7L243.7 183.3Q245.5 182.2 247.1 181.5L249.2 180.5Q250.7 179.8 250.9 180.1L251.1 180.4Q251.3 180.7 249.7 181.5L247.5 182.6Q245.9 183.5 244.1 184.5L241.6 185.8Q239.8 186.8 238.4 187.6L236.6 188.8Q235.2 189.6 235.0 189.4L234.7 189.0Q234.6 188.8 236.0 187.9L237.9 186.7ZM218.5 160.4L219.4 159.5L220.3 160.4L219.4 161.2ZM248.0 169.3L249.3 168.1L250.5 169.3L249.3 170.5ZM240.5 173.3L241.6 172.3L242.6 173.3L241.6 174.4ZM380.7 70.3Q382.1 69.8 383.1 70.5L384.3 71.5Q385.3 72.2 384.6 72.9L383.6 73.9Q382.9 74.6 381.7 74.3L380.1 74.0Q378.9 73.8 378.5 73.1L377.8 72.1Q377.3 71.4 378.8 70.9L380.7 70.3ZM311.4 318.0Q312.5 316.5 314.0 315.9L316.0 315.1Q317.5 314.5 318.2 314.9L319.2 315.6Q320.0 316.0 318.6 316.9L316.9 318.1Q315.5 319.0 314.6 320.4L313.4 322.1Q312.5 323.5 311.4 322.9L309.9 322.1Q308.8 321.5 309.9 320.0L311.4 318.0Z" fill="#fff" stroke="#fff" stroke-width="0.6" stroke-linejoin="round"/><path d="M620.5 68.5L626.2 72.8L629.0 77.0L633.5 84.5L639.5 89.0L641.0 92.5M631.2 85.2L626.0 89.0L621.2 95.2L617.0 95.0M645.0 66.0L650.0 71.0L651.5 77.5M621.5 69.0L623.8 71.5M644.5 66.5L647.0 68.0" fill="none" stroke="#fff" stroke-width="1.300" stroke-linecap="round" stroke-linejoin="round"/><path d="" fill="#000"/><g fill="#000"><circle cx="562.5" cy="29.5" r="1.8"/><circle cx="572.5" cy="28.5" r="1.9"/><circle cx="581.2" cy="27.0" r="1.6"/><circle cx="588.8" cy="28.5" r="1.5"/><circle cx="595.0" cy="26.0" r="1.1"/><circle cx="601.2" cy="24.0" r="0.8"/><circle cx="603.8" cy="27.8" r="0.8"/><circle cx="567.5" cy="31.5" r="1.0"/><circle cx="577.5" cy="31.0" r="1.0"/><circle cx="585.0" cy="31.0" r="0.9"/><circle cx="398.8" cy="21.5" r="1.0"/><circle cx="400.0" cy="35.2" r="1.0"/><circle cx="398.8" cy="44.0" r="1.0"/><circle cx="397.5" cy="56.5" r="1.0"/><circle cx="400.0" cy="57.8" r="1.0"/><circle cx="421.2" cy="78.5" r="1.0"/><circle cx="424.5" cy="77.0" r="1.0"/><circle cx="524.5" cy="32.2" r="1.0"/><circle cx="536.2" cy="32.2" r="1.0"/><circle cx="515.0" cy="38.5" r="1.0"/><circle cx="510.0" cy="40.2" r="1.0"/><circle cx="507.0" cy="49.8" r="1.0"/><circle cx="491.8" cy="59.0" r="1.0"/><circle cx="425.0" cy="114.5" r="1.0"/><circle cx="439.2" cy="120.2" r="1.0"/><circle cx="425.0" cy="128.5" r="1.0"/><circle cx="425.0" cy="132.0" r="1.0"/><circle cx="471.2" cy="140.9" r="1.0"/><circle cx="479.3" cy="141.6" r="1.0"/><circle cx="488.4" cy="132.5" r="1.0"/><circle cx="498.9" cy="128.3" r="1.0"/><circle cx="492.6" cy="120.6" r="1.0"/><circle cx="476.5" cy="87.7" r="1.0"/><circle cx="480.0" cy="85.6" r="1.0"/><circle cx="489.8" cy="80.0" r="1.0"/><circle cx="669.5" cy="25.4" r="1.1"/><circle cx="665.0" cy="47.0" r="1.1"/><circle cx="669.5" cy="44.6" r="1.1"/><circle cx="674.0" cy="42.5" r="1.1"/><circle cx="677.6" cy="41.0" r="1.1"/><circle cx="684.5" cy="46.4" r="1.1"/><circle cx="686.6" cy="50.6" r="1.1"/><circle cx="708.5" cy="42.5" r="1.1"/><circle cx="711.5" cy="47.0" r="1.1"/><circle cx="648.5" cy="57.5" r="1.1"/><circle cx="633.5" cy="63.5" r="1.1"/><circle cx="621.5" cy="63.5" r="1.1"/><circle cx="783.6" cy="54.5" r="1.1"/><circle cx="783.0" cy="61.4" r="1.1"/><circle cx="812.1" cy="56.0" r="1.1"/><circle cx="816.6" cy="50.0" r="1.1"/><circle cx="825.0" cy="52.4" r="1.1"/><circle cx="905.1" cy="74.6" r="1.1"/><circle cx="857.1" cy="138.6" r="1.1"/><circle cx="862.5" cy="143.1" r="1.1"/><circle cx="875.1" cy="148.2" r="1.1"/><circle cx="831.6" cy="156.6" r="1.1"/><circle cx="830.1" cy="161.1" r="1.1"/><circle cx="827.1" cy="165.6" r="1.1"/><circle cx="824.1" cy="168.6" r="1.1"/><circle cx="820.5" cy="171.6" r="1.1"/><circle cx="816.6" cy="174.6" r="1.1"/><circle cx="813.6" cy="176.7" r="1.1"/><circle cx="810.6" cy="179.1" r="1.1"/><circle cx="808.5" cy="180.9" r="1.1"/><circle cx="760.5" cy="214.5" r="1.1"/><circle cx="763.5" cy="217.5" r="1.1"/><circle cx="765.6" cy="219.6" r="1.1"/><circle cx="399.5" cy="219.0" r="1.0"/><circle cx="397.0" cy="231.5" r="1.0"/><circle cx="401.2" cy="233.2" r="1.0"/><circle cx="405.8" cy="232.8" r="1.0"/><circle cx="397.0" cy="235.2" r="1.0"/><circle cx="381.2" cy="269.0" r="1.0"/><circle cx="385.0" cy="269.5" r="1.0"/><circle cx="382.0" cy="273.5" r="1.0"/><circle cx="385.0" cy="273.5" r="1.0"/><circle cx="462.5" cy="306.5" r="1.0"/><circle cx="460.5" cy="310.2" r="1.0"/><circle cx="457.5" cy="314.0" r="1.0"/><circle cx="456.2" cy="317.0" r="1.0"/><circle cx="454.5" cy="322.8" r="1.0"/><circle cx="543.8" cy="331.5" r="1.0"/><circle cx="543.8" cy="335.2" r="1.0"/><circle cx="543.8" cy="339.0" r="1.0"/><circle cx="542.5" cy="345.2" r="1.0"/><circle cx="581.2" cy="330.2" r="1.0"/><circle cx="576.8" cy="334.8" r="1.0"/><circle cx="625.0" cy="292.8" r="1.0"/><circle cx="625.5" cy="296.5" r="1.0"/><circle cx="625.5" cy="300.2" r="1.0"/><circle cx="625.0" cy="305.2" r="1.0"/><circle cx="576.8" cy="280.8" r="1.0"/><circle cx="618.8" cy="252.0" r="2.0"/><circle cx="446.5" cy="197.3" r="1.3"/><circle cx="465.4" cy="186.3" r="1.5"/><circle cx="465.1" cy="193.4" r="1.9"/><circle cx="452.0" cy="194.2" r="0.9"/><circle cx="478.0" cy="202.0" r="0.9"/><circle cx="472.5" cy="205.2" r="0.9"/><circle cx="473.3" cy="209.4" r="0.9"/><circle cx="477.2" cy="208.8" r="0.9"/><circle cx="493.7" cy="201.2" r="0.9"/><circle cx="504.0" cy="206.0" r="0.9"/><circle cx="508.7" cy="204.7" r="0.9"/><circle cx="504.8" cy="209.4" r="0.9"/><circle cx="525.2" cy="209.1" r="1.4"/><circle cx="760.0" cy="216.0" r="1.0"/><circle cx="763.8" cy="219.0" r="1.0"/><circle cx="766.2" cy="225.2" r="1.0"/><circle cx="767.5" cy="232.8" r="1.0"/><circle cx="757.5" cy="241.5" r="1.0"/><circle cx="753.0" cy="243.5" r="1.0"/><circle cx="750.0" cy="244.0" r="1.0"/><circle cx="674.2" cy="280.2" r="1.0"/><circle cx="674.2" cy="283.5" r="1.0"/><circle cx="677.5" cy="297.8" r="1.0"/><circle cx="625.0" cy="293.5" r="1.0"/><circle cx="625.0" cy="297.0" r="1.0"/><circle cx="625.0" cy="301.0" r="1.0"/><circle cx="625.0" cy="305.2" r="1.0"/><circle cx="681.2" cy="309.0" r="1.0"/><circle cx="685.0" cy="314.0" r="1.0"/><circle cx="688.8" cy="319.0" r="1.0"/><circle cx="692.5" cy="324.0" r="1.0"/><circle cx="742.5" cy="281.5" r="1.0"/><circle cx="746.2" cy="279.0" r="1.0"/><circle cx="748.8" cy="282.8" r="1.0"/><circle cx="753.0" cy="284.0" r="1.0"/><circle cx="758.0" cy="287.0" r="1.0"/><circle cx="738.8" cy="287.8" r="1.0"/><circle cx="756.2" cy="322.8" r="1.0"/><circle cx="760.0" cy="324.0" r="1.0"/><circle cx="763.8" cy="319.0" r="1.0"/><circle cx="765.0" cy="309.0" r="1.0"/><circle cx="763.8" cy="315.2" r="1.0"/><circle cx="768.0" cy="321.5" r="1.0"/><circle cx="757.5" cy="327.8" r="1.0"/><circle cx="766.2" cy="326.0" r="1.0"/><circle cx="772.5" cy="321.5" r="1.0"/><circle cx="808.8" cy="271.5" r="1.0"/><circle cx="805.5" cy="275.2" r="1.0"/><circle cx="796.2" cy="298.2" r="1.0"/><circle cx="808.8" cy="300.2" r="1.0"/><circle cx="813.8" cy="297.8" r="1.0"/><circle cx="820.0" cy="293.2" r="1.0"/><circle cx="823.8" cy="294.0" r="1.0"/><circle cx="828.0" cy="291.0" r="1.0"/><circle cx="862.5" cy="272.8" r="1.0"/><circle cx="870.8" cy="290.8" r="1.0"/><circle cx="851.2" cy="302.0" r="1.0"/><circle cx="859.5" cy="318.5" r="1.0"/><circle cx="872.5" cy="314.0" r="1.0"/><circle cx="875.0" cy="320.2" r="1.0"/><circle cx="878.8" cy="322.8" r="1.0"/><circle cx="883.8" cy="324.5" r="1.0"/><circle cx="882.5" cy="337.0" r="1.0"/><circle cx="826.2" cy="326.5" r="1.0"/><circle cx="830.0" cy="331.5" r="1.0"/><circle cx="833.8" cy="334.0" r="1.0"/><circle cx="837.5" cy="337.0" r="1.0"/><circle cx="841.2" cy="339.5" r="1.0"/><circle cx="845.0" cy="341.5" r="1.0"/><circle cx="846.2" cy="345.2" r="1.0"/><circle cx="736.2" cy="342.8" r="1.0"/><circle cx="741.2" cy="344.0" r="1.0"/><circle cx="747.5" cy="343.5" r="1.0"/><circle cx="752.5" cy="345.2" r="1.0"/><circle cx="760.0" cy="342.8" r="1.0"/><circle cx="765.0" cy="341.0" r="1.0"/><circle cx="771.2" cy="339.0" r="1.0"/><circle cx="775.0" cy="334.0" r="1.0"/><circle cx="778.8" cy="331.5" r="1.0"/><circle cx="750.0" cy="338.5" r="1.0"/><circle cx="730.0" cy="337.0" r="1.0"/><circle cx="732.5" cy="337.0" r="1.0"/><circle cx="713.8" cy="324.0" r="1.0"/><circle cx="711.2" cy="326.0" r="1.0"/><circle cx="712.0" cy="306.0" r="1.0"/><circle cx="762.5" cy="237.8" r="1.5"/><circle cx="779.5" cy="297.8" r="1.5"/><circle cx="618.8" cy="251.5" r="1.5"/><circle cx="460.0" cy="312.0" r="1.0"/><circle cx="457.5" cy="316.0" r="1.0"/><circle cx="454.5" cy="322.8" r="1.0"/><circle cx="543.8" cy="332.8" r="1.0"/><circle cx="543.0" cy="337.0" r="1.0"/><circle cx="543.8" cy="341.5" r="1.0"/><circle cx="550.0" cy="352.8" r="1.0"/><circle cx="553.0" cy="355.2" r="1.0"/><circle cx="556.2" cy="357.8" r="1.0"/><circle cx="582.0" cy="330.2" r="1.0"/><circle cx="576.8" cy="335.2" r="1.0"/><circle cx="578.8" cy="366.0" r="1.0"/><circle cx="582.0" cy="380.2" r="1.0"/><circle cx="585.8" cy="379.5" r="1.0"/><circle cx="625.8" cy="485.8" r="1.0"/><circle cx="682.5" cy="309.0" r="1.0"/><circle cx="686.2" cy="315.2" r="1.0"/><circle cx="690.0" cy="321.5" r="1.0"/><circle cx="692.5" cy="326.5" r="1.0"/><circle cx="864.0" cy="466.0" r="1.0"/><circle cx="857.5" cy="475.2" r="1.0"/><circle cx="858.8" cy="362.8" r="1.0"/><circle cx="860.0" cy="366.5" r="1.0"/><circle cx="862.5" cy="369.0" r="1.0"/><circle cx="887.0" cy="369.8" r="1.0"/><circle cx="890.8" cy="367.0" r="1.0"/><circle cx="903.2" cy="379.5" r="1.0"/><circle cx="905.8" cy="377.0" r="1.0"/><circle cx="883.2" cy="336.5" r="1.0"/><circle cx="888.2" cy="340.2" r="1.0"/><circle cx="877.0" cy="324.0" r="1.0"/><circle cx="882.0" cy="325.2" r="1.0"/><circle cx="830.8" cy="334.0" r="1.0"/><circle cx="834.5" cy="336.5" r="1.0"/><circle cx="837.0" cy="339.5" r="1.0"/><circle cx="840.8" cy="338.5" r="1.0"/><circle cx="839.5" cy="342.0" r="1.0"/><circle cx="844.5" cy="341.5" r="1.0"/><circle cx="845.0" cy="345.2" r="1.0"/><circle cx="847.5" cy="347.8" r="1.0"/><circle cx="843.2" cy="350.2" r="1.0"/><circle cx="825.0" cy="349.0" r="1.0"/><circle cx="728.2" cy="336.5" r="1.0"/><circle cx="732.0" cy="337.8" r="1.0"/><circle cx="737.0" cy="342.8" r="1.0"/><circle cx="742.0" cy="345.2" r="1.0"/><circle cx="748.2" cy="347.2" r="1.0"/><circle cx="744.5" cy="342.8" r="1.0"/><circle cx="748.2" cy="339.0" r="1.0"/><circle cx="759.5" cy="327.8" r="1.0"/><circle cx="765.8" cy="327.8" r="1.0"/><circle cx="763.2" cy="339.0" r="1.0"/><circle cx="771.5" cy="340.2" r="1.0"/><circle cx="775.8" cy="334.0" r="1.0"/><circle cx="779.5" cy="334.0" r="1.0"/><circle cx="785.0" cy="357.8" r="1.0"/><circle cx="785.2" cy="426.5" r="1.0"/><circle cx="803.2" cy="440.2" r="1.0"/><circle cx="812.0" cy="440.2" r="1.0"/><circle cx="42.5" cy="251.0" r="1.0"/><circle cx="46.2" cy="253.0" r="1.0"/><circle cx="50.0" cy="255.2" r="1.0"/><circle cx="66.8" cy="369.8" r="1.0"/><circle cx="70.0" cy="372.0" r="1.0"/><circle cx="88.8" cy="381.0" r="1.0"/><circle cx="99.0" cy="379.0" r="1.0"/><circle cx="105.0" cy="385.2" r="1.0"/><circle cx="119.2" cy="389.2" r="1.0"/><circle cx="128.8" cy="391.5" r="1.0"/><circle cx="166.8" cy="397.8" r="1.0"/><circle cx="179.0" cy="395.5" r="1.0"/><circle cx="52.0" cy="259.0" r="1.5"/><circle cx="25.0" cy="121.5" r="0.9"/><circle cx="16.2" cy="134.8" r="0.9"/><circle cx="20.0" cy="146.5" r="0.9"/><circle cx="25.0" cy="144.0" r="0.9"/><circle cx="31.2" cy="142.0" r="0.9"/><circle cx="36.2" cy="127.8" r="0.9"/><circle cx="53.8" cy="135.2" r="0.9"/><circle cx="52.5" cy="139.0" r="0.9"/><circle cx="242.6" cy="84.1" r="1.0"/><circle cx="243.5" cy="87.9" r="1.2"/><circle cx="250.3" cy="90.1" r="1.6"/><circle cx="245.5" cy="109.6" r="1.1"/><circle cx="249.9" cy="108.6" r="1.0"/><circle cx="241.6" cy="113.7" r="1.6"/><circle cx="233.1" cy="113.2" r="1.4"/><circle cx="271.3" cy="120.9" r="1.0"/><circle cx="279.2" cy="124.2" r="1.0"/><circle cx="180.3" cy="56.8" r="1.2"/><circle cx="184.7" cy="55.3" r="0.9"/><circle cx="182.5" cy="52.4" r="0.8"/><circle cx="178.0" cy="46.4" r="0.9"/><circle cx="198.1" cy="54.6" r="0.9"/><circle cx="203.3" cy="57.6" r="1.8"/><circle cx="192.9" cy="34.5" r="1.0"/><circle cx="199.6" cy="43.0" r="1.2"/><circle cx="120.7" cy="76.9" r="0.9"/><circle cx="155.7" cy="44.2" r="0.8"/><circle cx="242.8" cy="84.4" r="1.0"/><circle cx="243.5" cy="88.1" r="1.0"/><circle cx="250.2" cy="90.3" r="1.5"/><circle cx="243.8" cy="236.5" r="1.0"/><circle cx="247.5" cy="237.0" r="1.0"/><circle cx="245.5" cy="240.2" r="1.0"/><circle cx="249.2" cy="241.0" r="1.0"/><circle cx="247.5" cy="244.0" r="1.0"/><circle cx="251.2" cy="244.8" r="1.0"/><circle cx="253.0" cy="247.8" r="1.0"/><circle cx="257.0" cy="249.5" r="1.0"/><circle cx="260.0" cy="251.5" r="1.0"/><circle cx="258.0" cy="254.0" r="1.0"/><circle cx="275.0" cy="261.5" r="1.0"/><circle cx="278.8" cy="263.5" r="1.0"/><circle cx="282.5" cy="265.2" r="1.0"/><circle cx="286.2" cy="267.0" r="1.0"/><circle cx="288.0" cy="270.2" r="1.0"/><circle cx="288.8" cy="274.0" r="1.0"/><circle cx="290.0" cy="277.8" r="1.0"/><circle cx="292.5" cy="279.0" r="1.0"/><circle cx="289.5" cy="281.5" r="1.0"/><circle cx="286.2" cy="281.5" r="1.0"/><circle cx="273.8" cy="279.8" r="1.0"/><circle cx="270.0" cy="280.2" r="1.0"/><circle cx="278.2" cy="218.2" r="1.0"/><circle cx="213.8" cy="314.0" r="1.0"/><circle cx="209.5" cy="318.5" r="1.0"/><circle cx="213.8" cy="319.0" r="1.0"/><circle cx="217.5" cy="319.0" r="1.0"/><circle cx="378.8" cy="268.5" r="1.0"/><circle cx="383.8" cy="269.0" r="1.0"/><circle cx="381.2" cy="272.8" r="1.0"/><circle cx="384.5" cy="273.5" r="1.0"/><circle cx="228.2" cy="265.2" r="1.0"/><circle cx="299.5" cy="170.2" r="1.0"/><circle cx="303.0" cy="169.5" r="1.0"/><circle cx="307.0" cy="168.5" r="1.0"/><circle cx="242.5" cy="420.2" r="1.0"/><circle cx="288.8" cy="481.5" r="1.0"/><circle cx="293.0" cy="480.2" r="1.0"/><circle cx="278.2" cy="491.5" r="1.0"/><circle cx="266.8" cy="496.0" r="1.0"/><circle cx="455.0" cy="322.8" r="1.0"/><circle cx="398.8" cy="21.4" r="1.0"/><circle cx="400.3" cy="35.7" r="1.0"/><circle cx="398.0" cy="43.6" r="1.0"/><circle cx="397.2" cy="55.5" r="1.0"/><circle cx="400.3" cy="57.9" r="1.0"/><circle cx="312.3" cy="15.1" r="1.0"/><circle cx="316.3" cy="14.3" r="1.0"/></g></svg></div>

    <!-- footer -->
    <div class="abs" style="left:8px;top:593px;width:156px;height:11px;background:linear-gradient(#ecc0a6,#b96a3e 50%,#c98560 70%,#f8f0ee)"></div>
    <div class="flink" style="left:21px">Home</div>
    <div class="flink" style="left:63px">Image encoder</div>
    <div class="flink" style="left:157px">SVG to PNG</div>
    <div class="flink" style="left:238px">SVG</div>
    <div class="flink" style="left:272.500px">Openclipart</div>
    <div class="flink" style="left:342.500px">SVG docs quick start guide</div>
    <div class="abs" style="left:1118px;top:610px;font-size:12.500px;color:#222">6-0</div>
  </div>

  <div id="status">
    <div class="abs" style="left:1051px;top:2px;width:1px;height:18px;background:#cfcfcf"></div>
    <div class="abs" style="left:1081px;top:2px;width:1px;height:18px;background:#cfcfcf"></div>
    <div class="abs" style="left:1111px;top:2px;width:1px;height:18px;background:#cfcfcf"></div>
  </div>
  <svg class="abs" style="left:0;top:0;pointer-events:none" width="1143" height="757" viewBox="0 0 1143 757" font-family="Liberation Sans, sans-serif">
<defs>
  <linearGradient id="gTri" x1="0" x2="1"><stop offset="0" stop-color="#e39a72"/><stop offset="1" stop-color="#f6d6c0"/></linearGradient>
  <linearGradient id="gStrip" x1="0" x2="1"><stop offset="0" stop-color="#fbeee6"/><stop offset="1" stop-color="#dba58b"/></linearGradient>
  <radialGradient id="gBlue"><stop offset="0" stop-color="#2f6fb5"/><stop offset=".6" stop-color="#6c9fd4"/><stop offset="1" stop-color="#c9daf0" stop-opacity="0"/></radialGradient>
  <linearGradient id="gDon" x1="0" x2="0" y1="0" y2="1"><stop offset="0" stop-color="#fdfdfd"/><stop offset=".6" stop-color="#f1f3f4"/><stop offset="1" stop-color="#b8c0c4"/></linearGradient>
  <linearGradient id="gNews" x1="0" x2="0" y1="0" y2="1"><stop offset="0" stop-color="#fdf3c8"/><stop offset="1" stop-color="#fbf3e4"/></linearGradient>
  <linearGradient id="gUndo" x1="0" x2="1"><stop offset="0" stop-color="#f9e692"/><stop offset="1" stop-color="#f7e9d6"/></linearGradient>
  <linearGradient id="gRedo" x1="0" x2="1"><stop offset="0" stop-color="#f7e9d6"/><stop offset="1" stop-color="#f9e692"/></linearGradient>
  <symbol id="face" viewBox="60 30 600 620">
    <path d="M150 230C200 160 330 130 415 150L520 120V430L415 440V600C340 600 250 540 200 470 160 400 140 300 150 230Z" fill="#f4efdc"/>
    <path d="M400 500C430 520 470 560 485 600 470 640 430 640 400 615Z" fill="#fdfdfd" stroke="#777" stroke-width="7"/>
    <path d="M80 300C80 150 200 50 320 50 400 50 470 80 520 110L500 140C420 112 330 112 250 142 180 172 140 232 132 300 127 380 170 520 215 580L150 600C100 500 80 400 80 300Z" fill="#a3917c"/>
    <path d="M105 270C145 155 260 92 410 100M118 330C150 200 250 125 420 122M120 420C140 480 160 540 185 590" fill="none" stroke="#e6dac8" stroke-width="9"/>
    <path d="M520 100C590 90 640 170 645 265L612 255C608 200 580 152 528 138Z" fill="#9a8872"/>
    <path d="M415 150V600M520 120V430L415 440M200 470C250 540 340 600 415 600" fill="none" stroke="#444" stroke-width="7"/>
    <path d="M530 130C590 200 582 330 530 450L470 462" fill="none" stroke="#666" stroke-width="5"/>
    <path d="M195 250C240 220 320 220 375 245M215 300C250 280 310 285 330 305M230 317C260 327 300 324 320 312M430 245C460 235 490 235 510 240M430 300C450 290 480 292 505 305M235 330C225 400 240 480 265 545M300 335C280 400 280 480 295 545M350 465C370 475 390 478 410 470" fill="none" stroke="#555" stroke-width="7"/>
    <circle cx="275" cy="308" r="12" fill="#7a78b0"/><circle cx="457" cy="320" r="12" fill="#8a9a3a"/>
  </symbol>
</defs>

<use href="#face" x="3.800" y="93.900" width="38" height="39.300"/>
<use href="#face" x="35" y="37" width="15.500" height="16"/>
<!-- drawing toolbar -->
<g id="tb" fill="none" stroke="#000">
  <!-- full extent -->
  <g stroke-width="3" stroke-linecap="butt">
    <path d="M170.500 117.500l9 9M170.500 127v-9.500H180M205.500 117.500l-9 9M196 117.500h9.500V127M170.500 152.500l9-9M170.500 143v9.500H180M205.500 152.500l-9-9M196 152.500h9.500V143"/>
  </g>
  <path d="M183 117.500h10M183 152.500h10M170.500 130v10M205.500 130v10" stroke="#555" stroke-width="1" stroke-dasharray="5 3"/>
  <!-- zoom out -->
  <circle cx="226.500" cy="131.500" r="11" fill="#a6dcd9" stroke="#555" stroke-width="2.400"/>
  <path d="M234.500 139.500L246 150.500" stroke="#111" stroke-width="3"/>
  <path d="M220 131.500h13" stroke="#111" stroke-width="2"/>
  <!-- zoom in -->
  <circle cx="268.800" cy="131.500" r="11" fill="#a6dcd9" stroke="#555" stroke-width="2.400"/>
  <path d="M276.800 139.500L288 150.500" stroke="#111" stroke-width="3"/>
  <path d="M262.300 131.500h13M268.800 125v13" stroke="#111" stroke-width="2"/>
  <!-- collapse -->
  <g stroke-width="3">
    <path d="M296 117.500l11 11M298.500 128.500h8.500V120M332 117.500l-11 11M329.500 128.500H321V120M296 153l11-11M298.500 142h8.500v8.500M332 153l-11-11M329.500 142H321v8.500"/>
  </g>
  <circle cx="314" cy="135.300" r="3.600" fill="#000" stroke="none"/>
  <!-- zoom rect -->
  <rect x="337.500" y="116.500" width="37" height="37" fill="#f5f5d2" stroke="#666" stroke-width="1"/>
  <circle cx="359.700" cy="140.500" r="6.300" fill="#fdfde8" stroke="#111" stroke-width="1.400"/>
  <path d="M364.300 145l5 5" stroke="#111" stroke-width="2.200"/>
  <!-- hand -->
  <path d="M391 136c-2.500-3-5-4.500-6.500-3.200-1.500 1.300 0 3.500 2 6.500 2.500 4 4 8.500 8 11.500 4 2.500 11 2.500 14.500 0 3-2.500 3.500-7 3.500-12v-9.500c0-3-4-3-4.200 0v6M408.300 135.300v-11c0-3-4.300-3-4.400 0v10M403.900 134v-12.500c0-3-4.400-3-4.500 0V134M399.400 134.500v-10c0-3-4.300-3-4.400 0V141" fill="#fff" stroke="#111" stroke-width="1.700" stroke-linejoin="round" stroke-linecap="round"/>
  <!-- pan arrows -->
  <g fill="#4d8bd0" stroke="#2f68ad" stroke-width="1" stroke-linejoin="round">
    <path d="M443 118l6 6.500h-12z"/><path d="M443 146.500l6-6.500h-12z"/><path d="M422.500 132l7-5.500v11z"/><path d="M463.500 132l-7-5.500v11z"/>
  </g>
  <!-- vertical resize -->
  <ellipse cx="487.500" cy="133" rx="16" ry="15" fill="url(#gBlue)" stroke="none"/>
  <path d="M487.500 116.500l13.500 8.500h-8.500v16h8.500l-13.500 8.500-13.500-8.500h8.500v-16H474z" fill="#6fa0d4" fill-opacity=".55" stroke="#444" stroke-width="1.200" stroke-linejoin="round"/>
  <path d="M482.500 125v16M492.500 125v16" stroke="#111" stroke-width="1.500"/>
  <!-- select box -->
  <path d="M513.500 154V114.500H553" stroke="#f00" stroke-width="1.200"/>
  <path d="M519.500 119L544.800 135 540 139.600 548.500 147.200 545.400 150.300 537 143 533.400 146.200z" fill="#fff" stroke="#000" stroke-width="1.700" stroke-linejoin="miter"/>
  <!-- undo / redo -->
  <path d="M558.300 128.600L571.800 115.300V123.300C583 123.300 589 129.500 589 136.800 589 142 587 147 583.400 150.600 585.500 146 585.500 142 583.500 139 581 135.300 577 134.300 571.800 134.300V142z" fill="url(#gUndo)" stroke="#e2dccb" stroke-width=".8"/>
  <path d="M631.800 128.600L618.300 115.300V123.300C607.100 123.300 601.200 129.500 601.200 136.800 601.200 142 603.200 147 606.700 150.600 604.600 146 604.600 142 606.600 139 609.100 135.300 613.100 134.300 618.300 134.300V142z" fill="url(#gRedo)" stroke="#e2dccb" stroke-width=".8"/>
</g>

<!-- menu icons -->
<g>
  <path d="M25 138.800h8.500l4.800 4.800V153H25z" fill="#fff" stroke="#333" stroke-width="1.200" stroke-linejoin="round"/><path d="M33.500 138.800l4.800 4.800h-4.800z" fill="#111"/>
  <path d="M25 163l.3 14.500 3.500-3.200 2.800 6 2.500-1.200-2.800-5.800 4.500-.3z" fill="#fff" stroke="#555" stroke-width="1.100" stroke-linejoin="round"/>
  <!-- shapes arrow -->
  <path d="M24.500 487.500h2.500v9h-2.500zM28.500 487.500h2.500v9h-2.500z" fill="#cfc98a" stroke="#a9a37a" stroke-width=".6"/><path d="M32 487.500h3.500v-3l5.500 7.500-5.500 7.500v-3H32z" fill="#f3ec8d" stroke="#a9a37a" stroke-width=".8"/>
  <!-- mic -->
  <rect x="30" y="507" width="7" height="12.500" rx="3.500" fill="#000"/><path d="M26.500 514.500c0 9 14 9 14 0M33.500 521.500v4M29 526h9" fill="none" stroke="#000" stroke-width="1.400"/>
  <!-- pencil -->
  <path d="M26.200 545.800l2-5 11.500-10 3 3-11.500 10z" fill="#c98d6b" stroke="#9a6a4e" stroke-width=".6"/><path d="M28.200 540.800l11.500-10 1.200 1.200-11.500 10z" fill="#5fa0a0"/><path d="M26.200 545.800l.9-2.400 1.400 1.500z" fill="#333"/>
  <!-- roller -->
  <path d="M22.500 564l5-4.500 12 11-5 4.500z" fill="#f3e85a" stroke="#8a7f20" stroke-width=".9"/><ellipse cx="37" cy="572.800" rx="3.300" ry="2" transform="rotate(-42 37 572.800)" fill="#fbf6b0" stroke="#8a7f20" stroke-width=".8"/><path d="M28 559.500l6-2.500 2.500 3" fill="none" stroke="#666" stroke-width=".9"/><path d="M36.500 560.500l7-5 2 1.500-7 5z" fill="#1a2e9a"/>
  <!-- feather -->
  <path d="M25.500 599c2-8 7-14 22.500-18-4 1-6 2.500-8 4.500 2-.5 3-.5 4.500-.5-6 2-10 6-13.500 9.500-2 1.500-4 3-5.500 4.500z" fill="#222" stroke="#111" stroke-width=".7"/><path d="M30 592c3-4 7-7 12-9" stroke="#f8f8ff" stroke-width=".6" fill="none"/>
  <!-- marker arrow -->
  <path d="M45 604L29.500 619" stroke="#000" stroke-width="1.400"/><path d="M26 622l2.600-8 5.200 5.400z" fill="#000"/>
  <!-- options -->
  <path d="M28 636.500v8h9.500v-5" fill="none" stroke="#111" stroke-width="1.200"/><path d="M28.500 637.500l4 4.500 9.500-12" fill="none" stroke="#0a8a1a" stroke-width="2.200"/>
</g>

<!-- elements panel -->
<g>
  <rect x="25.500" y="202.500" width="133" height="274" fill="#f8f8ff" stroke="#e4bfae" stroke-width="1"/>
  <rect x="10.500" y="204.500" width="14" height="272" fill="#fff" stroke="#d9b7a6" stroke-width="1"/>
  <rect x="11" y="205" width="14" height="139" fill="url(#gStrip)"/>
  <path d="M11 232.500h14M11 260.500h14M11 288.500h14M11 315.500h14M11 331.500h14" stroke="#e9c4b2" stroke-width=".6"/>
  <rect x="24.500" y="204" width="1.600" height="273" fill="#c9937a"/>
  <g font-size="7.500" fill="#333" text-anchor="middle">
    <text transform="translate(20.500 216.500) rotate(-90)">Text</text>
    <text transform="translate(20.500 245) rotate(-90)">Image</text>
    <text transform="translate(20.500 275) rotate(-90)">Line</text>
    <text transform="translate(20.500 302) rotate(-90)">Rect</text>
    <text transform="translate(20.500 323) rotate(-90)">Arc</text>
    <text transform="translate(20.500 352) rotate(-90)">Cubic</text>
    <text transform="translate(20.500 380) rotate(-90)">Quad</text>
    <text transform="translate(20.500 415.500) rotate(-90)">Cubic-s</text>
    <text transform="translate(20.500 462) rotate(-90)">Quad-s</text>
  </g>
  <g font-family="Liberation Serif, serif" font-weight="bold" font-size="12.500" fill="#a0522d">
    <clipPath id="cpT"><rect x="26" y="205" width="132" height="20"/></clipPath>
    <text x="30" y="211.800" clip-path="url(#cpT)">Text</text>
    <text x="30" y="269.700">Image</text>
    <text x="30" y="328.700">Line</text>
    <text x="30" y="386.500">Rect</text>
    <text x="30" y="446">Arc</text>
  </g>
  <!-- row 1 -->
  <text transform="translate(37.500 250.500) scale(1.42 1)" font-size="44" font-weight="bold" fill="#111">t</text>
  <g transform="translate(94.200 235.200)" fill="#f0e68c" stroke="#333" stroke-width="1">
    <path id="petal" d="M-2.500 0V-10.500a3.300 3.300 0 1 1 5 0V0z"/>
    <use href="#petal" transform="rotate(45)"/><use href="#petal" transform="rotate(90)"/><use href="#petal" transform="rotate(135)"/><use href="#petal" transform="rotate(180)"/><use href="#petal" transform="rotate(225)"/><use href="#petal" transform="rotate(270)"/><use href="#petal" transform="rotate(315)"/>
    <circle r="3.500" stroke="none"/>
  </g>
  <path d="M139 234.500c-1.500-2-5-1-5 2 0 4 6 5 8.500 1 3-4.500-1-10.500-7-9.500-7 1-9.500 9-5 13.500 5 5.500 16 4.500 20-2 3-5.500 1-12-4-15.500-5.500-3.500-15-3-20 2-3 3-3.500 7-2.500 11" fill="none" stroke="#222" stroke-width="1"/>
  <!-- row 2 images -->
  <rect x="40" y="280" width="19" height="29" fill="#5a5226"/><ellipse cx="49.500" cy="291" rx="4.500" ry="5.500" fill="#b09a4e"/><path d="M42 309c0-9 4-12 7.500-12s7.500 3 7.500 12z" fill="#2e2a14"/><ellipse cx="49.500" cy="289.500" rx="2.600" ry="3.300" fill="#d8bd72"/><rect x="40" y="280" width="19" height="7" fill="#7b7a3c" opacity=".7"/>
  <rect x="78.500" y="280" width="29.500" height="29" fill="#ebe6dc"/><path d="M78.500 292l8-3 21.500 14v6H101L83 296l-4.500 1.500z" fill="#a9c8ee"/><path d="M78.500 280h10l-3 7-7 3z" fill="#cfe3c0"/><path d="M79 298l8 3-2 8h-6.500z" fill="#f0d2cf"/><path d="M84 289.500h22" stroke="#c8c2b4" stroke-width="2.500" stroke-dasharray="2.500 1.500"/><rect x="91" y="306" width="13" height="2.500" fill="#777" opacity=".7"/><rect x="79" y="293" width="2" height="3" fill="#22a"/><rect x="79" y="299" width="2" height="3" fill="#22a"/>
  <use href="#face" x="122.500" y="280" width="29" height="30"/>
  <!-- row 3 -->
  <g stroke="#111" stroke-width="1" fill="none">
    <path d="M34.400 340.700L63.900 360.300"/><path d="M78.500 340.700L88.300 355.300 98 345.700 107.900 360.300"/>
    <path d="M133.400 335.700h9.400l9.800 10v9.600l-9.800 9.800h-9.400l-9.800-9.800v-9.600z" fill="#f0e68c"/>
    <rect x="34.400" y="401.700" width="29.500" height="14.600" fill="#f0e68c"/>
    <circle cx="93.300" cy="408.900" r="12.400" fill="#f0e68c"/><ellipse cx="136.900" cy="408.900" rx="17" ry="12.400" fill="#f0e68c"/>
  </g>
  <g fill="#111">
    <circle cx="34.400" cy="340.700" r="2.100"/><circle cx="63.900" cy="360.300" r="2.100"/>
    <circle cx="78.500" cy="340.700" r="2.100"/><circle cx="88.300" cy="355.300" r="2.100"/><circle cx="98" cy="345.700" r="2.100"/><circle cx="107.900" cy="360.300" r="2.100"/>
    <circle cx="133.400" cy="335.700" r="2.100"/><circle cx="142.800" cy="335.700" r="2.100"/><circle cx="152.600" cy="345.700" r="2.100"/><circle cx="152.600" cy="355.300" r="2.100"/><circle cx="142.800" cy="365.100" r="2.100"/><circle cx="133.400" cy="365.100" r="2.100"/><circle cx="123.600" cy="355.300" r="2.100"/><circle cx="123.600" cy="345.700" r="2.100"/>
    <circle cx="34.400" cy="401.700" r="2.100"/><circle cx="63.900" cy="416.300" r="2.100"/>
    <circle cx="93.300" cy="408.900" r="2.100"/><circle cx="104.200" cy="415.200" r="2.100"/>
    <circle cx="136.900" cy="408.900" r="2.100"/><circle cx="154.300" cy="408.900" r="2.100"/>
  </g>
  <!-- row 5 arcs (clipped by panel) -->
  <clipPath id="cpA"><rect x="26" y="440" width="132" height="36.500"/></clipPath>
  <g clip-path="url(#cpA)" fill="none" stroke="#111" stroke-width="1">
    <path d="M35.500 457.700c7-4 13-4 19.600-.4 6 3.500 9.600 10 9.600 19.200"/>
    <path d="M85 477c1.500-14 14.200-14 15.700 0"/><path d="M84.600 457.700V477M104 462.800l-3.300 14.200" stroke="#444" stroke-width=".7" stroke-dasharray="1.500 1.200"/>
    <path d="M124.200 477c6-11.500 19.800-11.500 25.800 0"/><path d="M136.900 454.700L124.200 477M136.900 454.700L150 477" stroke="#666" stroke-width=".6" stroke-dasharray="1 1"/>
    <g fill="#111" stroke="none"><circle cx="35.500" cy="457.700" r="2.100"/><circle cx="55.100" cy="457.300" r="2.100"/><circle cx="64.700" cy="476.500" r="2.100"/><circle cx="84.600" cy="457.700" r="2.100"/><circle cx="104" cy="462.800" r="2.100"/><circle cx="136.900" cy="454.700" r="1.800"/></g>
  </g>
</g>

<!-- footer icons -->
<g>
  <g fill="#dba9a9">
    <path d="M897 705h9l-3 3 4.500 4.500-3 3L900 711l-3 3z"/><path d="M921 705v9l-3-3-4.500 4.500-3-3L915 708l-3-3z"/><path d="M897 726.500v-9l3 3 4.500-4.500 3 3-4.500 4.500 3 3z"/><path d="M921 726.500h-9l3-3-4.500-4.500 3-3 4.500 4.500 3-3z"/>
  </g>
  <path d="M935 705h52.500v20.500H954l-6 3-5.500-3H935z" fill="url(#gNews)" stroke="#d7a27f" stroke-width="1"/>
  <text x="961.500" y="718" font-size="9" font-weight="bold" font-style="italic" fill="#111" text-anchor="middle" letter-spacing="1.800">NEWS</text>
  <rect x="1000" y="704" width="25.500" height="17.500" fill="#f5f0cf" stroke="#d9d6bf" stroke-width="1"/><path d="M1000 704l12.800 10 12.700-10" fill="none" stroke="#cfcbb0" stroke-width="1"/>
  <rect x="1036" y="705.500" width="72.500" height="20.500" rx="10.200" fill="url(#gDon)" stroke="#c5cbcf" stroke-width="1"/>
  <text x="1072" y="720.300" font-size="14.500" font-weight="bold" font-style="italic" fill="#111" text-anchor="middle">Donate</text>
</g>

<!-- status icons -->
<g>
  <circle cx="1068" cy="746" r="7" fill="#fff" stroke="#e01818" stroke-width="2"/><text x="1068" y="748.500" font-size="6" font-weight="bold" text-anchor="middle" fill="#111">AD</text><path d="M1063 741l10 10" stroke="#e01818" stroke-width="1.800"/>
  <rect x="1094" y="738.500" width="12" height="9" fill="#6aa7e8" stroke="#2d6fc0" stroke-width="1"/><rect x="1090.500" y="742" width="12" height="10" fill="#8ec0f5" stroke="#2d6fc0" stroke-width="1"/><circle cx="1096.500" cy="746" r="2" fill="#111"/><path d="M1092.500 751.500c0-4 8-4 8 0z" fill="#111"/>
  <circle cx="1128" cy="744" r="6.500" fill="#3f95e6" stroke="#2a70c0" stroke-width=".8"/><ellipse cx="1126" cy="741.500" rx="3" ry="2" fill="#a6d4fa"/><path d="M1128 750.500v3M1122.500 754h11" stroke="#777" stroke-width="1.400"/><circle cx="1128" cy="754" r="1.600" fill="#3cb043"/>
</g>
</svg>

  <div id="winb"></div>
</div>
</body>
</html>
